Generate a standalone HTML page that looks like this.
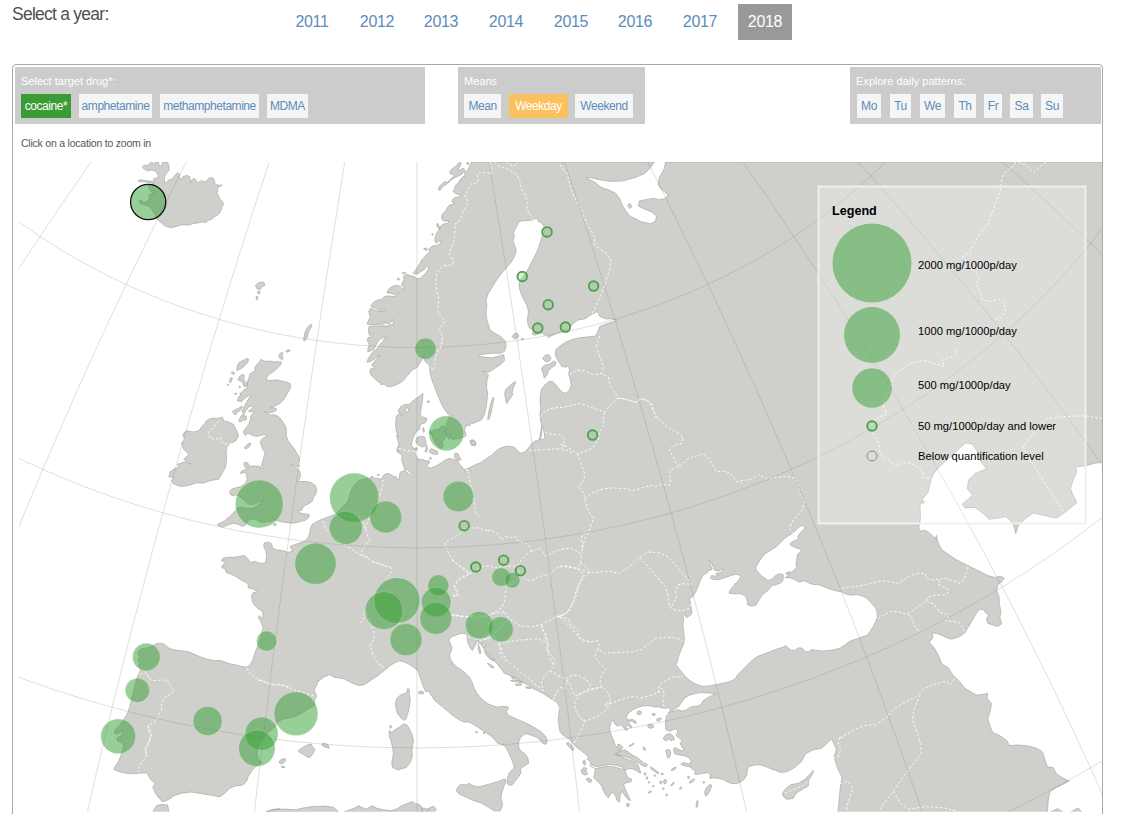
<!DOCTYPE html>
<html lang="en">
<head>
<meta charset="utf-8">
<title>Wastewater analysis and drugs</title>
<style>
html,body{margin:0;padding:0;background:#fff;}
body{width:1127px;height:814px;overflow:hidden;position:relative;font-family:"Liberation Sans",Arial,sans-serif;color:#444;}
.abs{position:absolute;}
#yearlabel{left:12px;top:3px;font-size:17.5px;line-height:22px;color:#505050;letter-spacing:-0.75px;white-space:nowrap;}
.yr{position:absolute;top:4px;height:36px;line-height:36px;width:54px;text-align:center;font-size:16px;color:#5b8cba;letter-spacing:-0.3px;}
.yr.sel{background:#999;color:#fff;}
#box{left:12px;top:64px;width:1089px;height:800px;border:1px solid #a8a8a8;border-radius:4px;background:#fff;}
.panel{position:absolute;top:67px;height:57px;background:#ccc;}
.plabel{position:absolute;top:75px;font-size:11px;line-height:13px;color:#fff;white-space:nowrap;letter-spacing:0.02px;}
.btn{position:absolute;top:94px;height:24px;line-height:24px;background:#f5f5f5;color:#5b8cba;font-size:12px;text-align:center;white-space:nowrap;letter-spacing:-0.45px;}
.btn.g{background:#3a9c35;color:#fff;}
.btn.o{background:#fbc15e;color:#fff;}
#hint{left:21px;top:137px;font-size:10.5px;line-height:13px;color:#555;white-space:nowrap;letter-spacing:-0.22px;}
#map{left:13px;top:162px;}
</style>
</head>
<body>
<div id="yearlabel" class="abs">Select a year:</div>
<div class="yr" style="left:285px">2011</div>
<div class="yr" style="left:350px">2012</div>
<div class="yr" style="left:414px">2013</div>
<div class="yr" style="left:479px">2014</div>
<div class="yr" style="left:544px">2015</div>
<div class="yr" style="left:608px">2016</div>
<div class="yr" style="left:673px">2017</div>
<div class="yr sel" style="left:738px">2018</div>

<div id="box" class="abs"></div>
<div class="panel" style="left:15px;width:410px"></div>
<div class="panel" style="left:458px;width:187px"></div>
<div class="panel" style="left:850px;width:251px"></div>

<div class="plabel" style="left:21px">Select target drug*:</div>
<div class="btn g" style="left:21px;width:50px">cocaine*</div>
<div class="btn" style="left:79px;width:73px">amphetamine</div>
<div class="btn" style="left:160px;width:99px">methamphetamine</div>
<div class="btn" style="left:267px;width:41px">MDMA</div>

<div class="plabel" style="left:464px">Means</div>
<div class="btn" style="left:464px;width:37px">Mean</div>
<div class="btn o" style="left:509px;width:59px">Weekday</div>
<div class="btn" style="left:575px;width:58px">Weekend</div>

<div class="plabel" style="left:856px">Explore daily patterns:</div>
<div class="btn" style="left:857px;width:24px">Mo</div>
<div class="btn" style="left:890px;width:21px">Tu</div>
<div class="btn" style="left:920px;width:25px">We</div>
<div class="btn" style="left:954px;width:22px">Th</div>
<div class="btn" style="left:984px;width:18px">Fr</div>
<div class="btn" style="left:1010px;width:23px">Sa</div>
<div class="btn" style="left:1041px;width:22px">Su</div>

<div id="hint" class="abs">Click on a location to zoom in</div>

<svg id="map" class="abs" width="1089" height="650" viewBox="13 162 1089 650">
<defs><clipPath id="mc"><rect x="13" y="162" width="1089.5" height="649.6"/></clipPath></defs>
<g clip-path="url(#mc)">
<path d="M142.1,167.2 L143.8,165.5 L146.5,165.0 L147.7,166.2 L149.0,164.0 L150.4,162.8 L152.1,162.2 L153.2,164.4 L154.8,162.4 L158.2,162.0 L159.3,165.0 L160.9,166.6 L162.0,164.4 L162.6,162.0 L167.6,162.0 L168.5,164.4 L169.2,168.3 L168.7,171.1 L165.9,173.8 L164.8,176.6 L164.2,179.9 L164.8,183.2 L167.0,182.1 L168.7,179.9 L171.4,179.4 L173.1,177.7 L175.3,174.9 L177.5,172.7 L179.2,173.8 L179.7,177.7 L181.4,179.4 L183.1,176.6 L186.4,175.5 L189.1,176.0 L190.2,178.8 L190.8,183.2 L191.9,179.9 L193.6,178.3 L195.8,179.4 L197.4,182.7 L199.6,181.6 L202.4,180.5 L204.1,182.1 L207.4,180.5 L208.5,178.3 L210.7,177.5 L213.5,178.3 L214.6,181.6 L215.1,184.3 L218.5,185.2 L222.3,184.9 L220.1,186.5 L217.3,188.2 L217.9,191.0 L216.8,193.2 L218.5,195.4 L219.6,198.7 L222.3,201.5 L223.8,203.7 L222.3,206.5 L221.2,209.8 L219.6,213.1 L217.3,215.3 L214.0,217.0 L211.8,219.2 L208.5,220.3 L205.2,222.5 L201.9,221.9 L197.4,223.1 L193.0,223.6 L188.6,225.3 L184.2,224.7 L179.7,225.3 L176.4,226.4 L172.0,227.5 L167.6,226.9 L164.2,225.3 L161.5,223.1 L158.7,220.8 L157.1,219.2 L155.4,215.3 L153.2,212.0 L151.5,208.7 L148.8,206.5 L146.0,205.4 L142.7,204.2 L139.9,203.7 L139.0,201.5 L140.5,199.8 L142.1,200.9 L144.3,202.6 L147.1,200.9 L149.3,198.7 L149.9,196.5 L148.2,196.0 L149.9,194.8 L151.5,193.2 L154.3,193.0 L152.1,192.1 L149.9,190.4 L149.0,187.7 L147.7,186.0 L153.2,183.8 L150.4,182.7 L146.5,182.1 L142.1,181.6 L138.8,181.6 L138.3,180.5 L140.5,179.7 L144.3,180.5 L148.8,181.0 L153.2,181.6 L154.8,181.0 L153.2,179.9 L153.7,178.8 L156.5,177.7 L158.7,177.1 L158.2,175.5 L157.1,173.3 L156.0,171.6 L153.2,170.5 L150.4,170.0 L147.7,171.1 L145.7,170.0 L143.8,168.8ZM255.4,285.4 L258.4,282.4 L263.9,282.2 L264.8,285.4 L261.4,287.1 L260.4,289.6 L257.4,289.1ZM257.9,291.1 L259.9,291.6 L259.4,294.1 L257.9,293.6ZM256.4,296.1 L257.9,296.6 L257.4,299.8 L256.1,299.1ZM303.6,340.1 L304.8,332.6 L307.3,327.6 L311.1,323.9 L311.8,326.4 L308.6,331.4 L306.8,338.8 L304.3,341.3ZM449.7,172.4 L450.9,169.9 L454.0,167.5 L456.5,165.6 L458.4,163.1 L460.9,162.5 L460.2,166.2 L458.4,168.7 L459.6,170.6 L462.1,168.7 L464.0,168.7 L464.6,171.2 L462.1,173.7 L459.6,175.5 L456.5,176.8 L453.4,178.6 L450.3,180.5 L449.1,182.4 L447.2,183.0 L449.7,179.9 L452.8,177.4 L454.7,175.5 L452.2,174.3 L450.3,173.9ZM438.5,189.8 L439.1,186.7 L441.6,184.2 L444.7,181.7 L447.2,182.4 L446.6,184.2 L443.5,186.1 L441.6,188.0 L440.0,190.4ZM431.6,234.3 L432.5,233.3 L433.5,234.3 L432.5,235.3ZM436.6,224.0 L437.9,223.4 L439.1,226.5 L441.0,227.7 L439.1,228.9 L437.3,227.1ZM423.6,248.8 L426.1,248.0 L428.0,249.7 L425.5,250.4ZM466.5,163.1 L468.1,162.2 L468.9,163.7 L467.3,164.7ZM260.9,359.3 L264.6,361.2 L269.6,361.2 L274.5,361.8 L281.4,361.8 L280.7,364.9 L277.0,368.6 L273.3,371.7 L269.6,374.2 L267.1,376.7 L266.5,380.4 L270.8,380.4 L275.8,379.8 L282.0,381.1 L287.0,382.3 L290.1,383.5 L290.7,386.6 L288.8,391.0 L286.3,395.3 L283.9,399.1 L281.4,402.2 L277.6,404.7 L273.3,406.5 L270.2,407.8 L274.5,407.8 L277.0,409.6 L274.5,411.5 L270.8,412.7 L267.1,412.7 L264.6,411.5 L267.7,414.0 L270.8,415.2 L274.5,414.6 L278.3,416.5 L281.4,419.6 L283.2,422.7 L285.7,426.4 L286.3,430.7 L286.3,435.7 L288.2,440.7 L291.3,445.0 L294.4,448.8 L296.3,452.4 L298.8,456.8 L299.4,460.5 L298.1,463.6 L299.4,466.7 L296.3,466.1 L291.9,464.2 L290.7,464.8 L295.7,467.3 L298.1,469.2 L300.0,471.7 L300.6,475.4 L299.4,479.1 L298.1,481.6 L301.9,481.6 L306.8,481.6 L311.8,482.9 L314.9,485.3 L316.8,489.1 L316.1,493.4 L313.7,497.1 L312.4,500.9 L309.3,503.4 L305.6,505.2 L302.5,507.7 L301.9,510.2 L298.1,510.8 L300.6,513.3 L305.0,513.9 L309.3,514.5 L308.7,517.6 L305.6,520.1 L300.6,521.4 L296.9,522.6 L292.5,523.2 L287.0,522.6 L282.0,522.0 L277.6,520.7 L273.9,519.5 L270.8,522.0 L267.7,521.4 L263.4,522.6 L258.4,521.4 L255.9,519.5 L252.2,518.9 L247.8,520.7 L246.6,523.2 L244.7,525.7 L242.2,526.3 L238.5,524.5 L233.5,523.2 L229.2,524.5 L224.8,526.3 L222.4,527.0 L218.6,525.7 L217.1,524.5 L221.1,522.6 L224.8,520.7 L229.2,517.0 L232.9,513.3 L235.4,510.8 L237.3,508.1 L239.8,507.1 L244.7,507.7 L249.7,508.6 L253.4,508.3 L257.1,505.8 L260.9,502.7 L263.6,500.5 L259.6,501.5 L254.7,504.0 L249.7,504.6 L246.0,502.1 L242.2,498.4 L238.5,495.9 L236.0,494.7 L233.5,495.9 L230.4,494.7 L229.6,491.6 L231.7,489.1 L236.0,487.8 L241.0,486.6 L246.0,482.9 L247.2,478.5 L246.6,475.4 L245.3,472.3 L242.2,472.9 L240.4,473.5 L241.6,471.1 L244.7,469.8 L247.8,468.0 L249.7,466.1 L254.7,466.1 L259.6,466.3 L262.1,468.0 L264.0,468.3 L263.4,465.5 L261.5,466.1 L262.1,463.0 L263.4,459.9 L264.0,456.1 L265.2,452.4 L263.4,450.6 L260.2,442.5 L262.1,438.8 L264.6,437.0 L267.7,435.7 L265.8,434.5 L262.1,435.1 L257.1,436.3 L252.8,435.7 L249.7,433.9 L247.2,433.2 L245.3,435.7 L243.5,432.0 L244.7,429.5 L247.2,426.4 L249.1,423.3 L250.3,419.6 L250.9,415.8 L253.4,412.7 L252.8,410.9 L249.7,412.1 L248.4,410.9 L250.9,409.6 L252.8,407.8 L251.6,405.9 L249.1,406.5 L246.6,409.6 L244.1,413.4 L242.2,412.1 L242.9,409.6 L244.7,405.9 L246.6,402.2 L248.4,399.1 L250.9,396.0 L249.7,395.3 L245.3,397.8 L243.5,399.7 L241.0,401.6 L237.3,400.9 L238.5,396.6 L241.0,395.3 L239.8,393.5 L242.2,392.2 L244.1,389.8 L246.6,387.9 L247.8,386.0 L247.2,383.5 L247.8,380.4 L249.1,378.0 L249.7,374.2 L252.2,372.4 L255.3,370.5 L254.7,368.0 L256.5,364.9 L259.0,362.4ZM236.6,369.9 L237.3,366.1 L239.1,362.4 L242.9,360.6 L247.2,358.4 L248.7,359.3 L247.8,362.4 L245.3,364.9 L242.9,367.4 L239.8,369.3 L237.3,370.5ZM231.1,372.4 L233.5,371.7 L234.8,373.6 L232.9,374.6ZM229.6,382.3 L229.8,379.2 L231.3,377.1 L232.3,378.6 L231.3,381.7 L230.1,382.9ZM227.3,384.5 L228.3,384.0 L228.8,385.0 L227.8,385.5ZM237.9,379.2 L239.8,376.1 L242.9,374.2 L244.5,375.5 L243.7,378.6 L244.7,381.7 L247.2,383.5 L246.6,386.0 L244.1,386.6 L242.9,383.5 L241.0,381.1 L238.8,380.4ZM239.0,386.5 L240.2,386.3 L240.5,387.5 L239.3,387.8ZM234.5,393.7 L236.3,393.0 L236.5,394.0 L235.0,394.7ZM232.5,411.5 L235.4,409.4 L238.5,408.4 L241.6,406.1 L242.5,407.4 L240.4,410.2 L237.3,412.1 L236.0,414.6 L234.2,414.3ZM238.8,420.8 L240.4,417.1 L242.9,414.0 L244.5,414.6 L243.5,417.7 L244.7,416.5 L246.2,415.8 L246.6,419.6 L244.7,420.8 L243.5,419.6 L241.6,421.4 L239.5,421.8ZM244.5,448.1 L246.0,445.7 L248.4,443.4 L250.7,443.2 L250.3,445.4 L248.4,447.5 L246.0,449.1ZM278.9,357.5 L279.5,354.3 L281.4,352.2 L283.0,353.1 L282.0,355.6 L283.2,358.1 L282.0,359.7 L280.5,358.7ZM285.7,351.2 L287.6,350.0 L290.1,350.0 L289.4,351.5 L287.0,352.2ZM243.7,464.2 L244.7,462.4 L247.2,462.4 L249.1,464.8 L247.8,467.1 L245.3,467.6ZM273.3,525.1 L274.5,523.5 L276.4,523.9 L275.8,525.5ZM206.2,420.8 L211.2,418.3 L218.6,418.3 L222.4,417.1 L223.6,420.8 L228.6,422.0 L233.5,424.5 L236.0,429.5 L238.5,435.7 L236.0,440.7 L231.1,443.2 L227.3,445.7 L226.1,451.9 L226.6,459.3 L225.6,466.8 L222.4,473.0 L218.6,479.2 L211.2,480.4 L203.7,482.9 L196.3,482.9 L188.8,485.4 L181.4,486.6 L173.9,484.2 L171.4,480.4 L175.2,478.0 L168.9,476.7 L170.2,471.7 L173.9,469.3 L178.9,466.8 L177.6,464.3 L185.1,461.8 L191.3,464.3 L183.9,459.3 L188.8,454.3 L183.9,449.4 L181.4,443.2 L185.1,439.4 L182.6,434.5 L186.3,430.7 L193.8,432.0 L198.8,430.7 L202.5,425.8 L205.0,423.3ZM471.4,162.1 L469.6,166.2 L467.7,170.6 L464.6,172.4 L465.2,175.5 L462.1,177.4 L459.6,180.5 L458.4,183.0 L455.9,184.8 L454.7,188.0 L453.4,191.7 L455.3,193.5 L458.4,194.2 L460.2,195.4 L458.4,197.3 L455.3,197.3 L452.8,199.1 L451.9,201.6 L454.7,202.9 L452.8,204.1 L449.1,205.3 L446.6,208.4 L446.6,210.3 L443.5,212.8 L441.6,215.9 L441.6,219.0 L443.5,220.9 L447.2,220.9 L449.7,221.5 L447.2,223.4 L443.5,224.0 L441.0,225.8 L439.5,228.9 L437.3,232.0 L435.4,236.4 L434.8,240.7 L436.0,243.2 L439.8,240.7 L441.6,240.7 L439.8,243.9 L436.6,245.7 L432.9,245.7 L429.2,248.8 L429.8,251.9 L426.7,254.4 L423.6,258.1 L421.7,260.0 L420.7,261.8 L418.9,264.9 L417.0,268.0 L415.2,270.5 L413.3,273.0 L414.5,274.2 L417.6,273.6 L420.7,271.7 L423.9,269.9 L426.3,267.4 L427.6,266.1 L428.8,267.4 L427.6,270.5 L425.1,273.6 L422.6,276.1 L420.7,278.0 L417.0,278.8 L414.5,276.7 L412.0,276.1 L409.6,275.5 L407.7,274.2 L405.2,274.8 L403.4,276.7 L404.0,279.8 L402.7,282.3 L401.5,284.8 L403.4,287.3 L404.3,289.8 L402.1,288.5 L399.6,286.0 L397.1,285.4 L393.4,286.0 L389.7,287.9 L387.8,290.4 L387.2,292.9 L390.3,293.2 L393.4,294.1 L395.3,295.3 L397.1,292.9 L399.0,292.9 L396.5,296.0 L393.4,296.6 L389.7,296.0 L386.6,296.0 L383.5,297.2 L381.6,299.7 L378.5,299.7 L375.4,300.9 L372.9,302.8 L371.1,305.3 L371.7,307.1 L374.8,307.8 L377.3,309.6 L381.0,310.6 L384.7,309.6 L386.0,309.4 L384.1,311.1 L380.4,311.5 L376.6,310.9 L373.5,309.4 L370.4,308.4 L368.8,310.9 L369.2,314.0 L370.4,317.1 L368.8,319.6 L368.0,322.0 L366.7,323.3 L368.0,324.5 L372.3,324.3 L377.3,324.5 L382.2,324.3 L384.7,323.3 L384.1,321.4 L385.3,322.0 L386.6,323.9 L389.7,323.3 L391.6,321.4 L390.9,318.9 L392.2,318.3 L392.8,321.4 L394.0,323.3 L391.6,324.5 L388.4,325.2 L387.8,327.0 L386.6,325.8 L382.2,325.8 L377.3,326.0 L372.3,325.8 L369.2,326.4 L368.3,329.5 L368.8,333.2 L369.8,335.7 L372.9,333.2 L373.5,334.5 L370.4,337.0 L368.0,337.6 L367.3,340.7 L368.6,342.5 L369.2,345.7 L368.0,348.1 L368.0,350.0 L367.6,351.8 L373.5,350.0 L375.4,346.3 L377.3,342.5 L379.8,339.4 L382.9,337.6 L387.2,336.7 L386.2,338.2 L384.1,338.8 L382.9,341.9 L381.6,342.5 L379.8,344.4 L377.3,348.1 L376.0,350.0 L372.5,352.4 L369.8,356.1 L367.3,360.5 L367.1,362.4 L371.1,361.1 L376.0,358.0 L379.8,355.5 L377.3,358.6 L373.5,362.4 L371.7,364.8 L372.9,366.7 L376.6,368.0 L378.5,366.1 L379.5,367.3 L377.3,369.2 L372.9,368.3 L370.4,369.2 L369.8,372.3 L371.7,376.0 L376.0,379.8 L380.4,383.5 L381.0,384.7 L384.1,384.1 L386.6,386.2 L390.9,386.6 L395.3,385.3 L400.2,382.9 L404.0,379.8 L407.1,376.0 L410.2,372.3 L413.3,369.2 L416.4,368.0 L418.9,364.8 L420.7,361.7 L422.0,358.6 L423.0,355.5 L423.9,358.6 L424.5,360.5 L427.0,363.0 L429.4,365.5 L429.7,369.8 L430.4,374.8 L431.9,379.8 L433.8,384.7 L435.7,389.7 L437.5,394.7 L439.4,399.0 L441.2,403.4 L443.7,408.3 L446.8,412.7 L449.9,415.8 L448.1,419.5 L446.8,423.2 L446.2,427.0 L445.6,431.9 L446.8,435.7 L449.3,439.4 L449.9,433.7 L450.6,437.5 L452.4,439.3 L456.8,438.9 L461.1,438.1 L464.2,436.8 L466.1,435.6 L465.5,432.5 L464.2,430.0 L466.7,425.1 L469.8,425.7 L470.4,423.9 L475.4,422.6 L480.0,420.5 L481.8,419.5 L484.3,414.4 L486.0,407.7 L486.9,400.9 L487.7,394.2 L486.5,387.4 L486.9,380.7 L488.5,374.8 L485.2,373.1 L482.6,371.4 L486.9,372.3 L490.2,371.4 L495.3,368.0 L500.3,364.7 L504.6,360.5 L503.7,354.6 L498.7,356.2 L491.9,357.9 L483.5,357.1 L478.4,355.7 L480.1,354.6 L495.3,352.9 L499.5,353.7 L504.6,351.2 L506.2,346.1 L505.4,341.1 L501.2,336.9 L495.3,333.5 L490.2,330.1 L488.5,325.1 L486.9,320.0 L486.0,313.1 L486.9,306.4 L486.0,299.6 L488.5,292.9 L491.9,287.8 L495.3,281.9 L499.5,276.0 L503.7,271.0 L507.9,265.9 L512.1,260.9 L514.7,255.8 L516.4,250.7 L514.7,245.7 L513.0,240.6 L514.7,235.6 L513.0,233.9 L515.2,228.8 L517.2,225.5 L518.9,222.1 L522.3,220.7 L529.0,220.4 L534.1,219.6 L536.6,217.9 L538.3,221.2 L542.5,223.8 L544.2,227.1 L544.2,231.4 L542.5,235.6 L540.8,240.6 L539.1,245.7 L536.6,252.4 L534.1,257.5 L531.5,262.5 L529.0,267.6 L526.5,271.8 L523.9,276.0 L520.6,279.4 L518.9,284.5 L519.7,289.5 L521.4,294.6 L523.9,299.6 L526.5,304.7 L528.2,309.7 L528.2,314.8 L527.3,320.0 L528.2,325.1 L529.8,328.4 L533.2,330.1 L532.4,334.3 L534.9,335.2 L539.1,333.5 L542.5,332.6 L544.2,335.2 L546.7,334.3 L548.4,337.7 L550.9,336.0 L556.0,333.5 L561.9,331.8 L567.8,329.3 L571.1,325.9 L574.5,322.5 L577.9,320.0 L584.8,318.9 L592.3,314.0 L597.3,311.5 L599.8,316.5 L606.0,318.9 L612.2,318.9 L617.1,320.2 L609.7,322.7 L599.8,326.4 L597.3,332.6 L595.6,336.0 L588.0,336.9 L579.6,337.7 L572.8,339.4 L566.1,341.9 L561.0,345.3 L556.0,349.5 L555.1,353.7 L556.8,358.8 L560.2,363.8 L561.9,366.4 L566.1,367.2 L568.6,365.2 L569.5,370.6 L568.6,373.9 L570.3,379.0 L571.1,384.9 L569.5,390.0 L566.1,393.3 L562.7,392.5 L559.3,389.1 L556.0,384.9 L552.6,381.5 L549.2,381.5 L545.0,384.9 L541.6,389.1 L540.5,394.2 L540.0,400.9 L540.5,407.7 L540.0,416.1 L540.8,421.1 L541.6,426.2 L540.8,431.3 L540.0,436.3 L539.1,439.7 L534.1,441.4 L530.7,444.7 L527.3,449.8 L523.9,452.3 L520.6,453.2 L517.2,450.6 L515.5,448.1 L512.1,446.4 L507.1,446.1 L500.3,448.1 L495.3,451.5 L491.9,455.0 L480.0,462.9 L475.4,464.8 L471.7,466.6 L468.0,468.5 L464.2,469.8 L462.4,467.3 L459.9,464.2 L456.8,461.1 L453.0,459.2 L449.3,458.3 L445.6,459.8 L441.9,462.3 L438.1,464.8 L434.4,466.6 L431.3,467.9 L427.6,467.3 L427.0,464.8 L429.4,462.9 L428.8,460.4 L427.0,461.1 L423.2,459.8 L419.5,459.2 L417.0,458.0 L415.8,454.8 L414.5,451.7 L416.4,449.9 L413.3,448.0 L411.4,445.5 L412.0,441.8 L413.3,437.5 L415.2,433.7 L417.6,430.0 L419.5,429.4 L420.1,425.7 L422.0,423.5 L424.5,423.2 L426.3,421.4 L426.7,418.3 L424.5,417.6 L421.4,416.4 L420.1,414.5 L420.7,410.8 L421.4,407.1 L422.2,402.1 L422.6,398.4 L423.0,393.4 L419.5,395.9 L414.5,399.6 L408.9,404.6 L404.6,404.6 L400.9,406.5 L398.0,410.8 L399.6,413.3 L396.5,415.8 L395.9,419.5 L395.7,425.7 L396.5,431.9 L398.4,436.9 L396.5,435.0 L398.1,441.2 L399.0,446.1 L397.4,447.4 L396.9,451.1 L398.4,453.0 L400.9,453.6 L402.1,456.7 L401.5,459.8 L402.7,462.9 L404.0,467.3 L404.6,470.4 L407.7,469.8 L410.8,472.9 L413.9,476.6 L412.7,477.0 L409.6,474.1 L405.8,471.6 L402.7,471.0 L400.2,472.2 L399.6,475.3 L399.0,479.1 L397.1,479.7 L396.5,477.2 L395.3,476.0 L394.7,477.8 L392.2,475.3 L388.4,473.5 L384.7,474.1 L382.9,476.0 L382.2,479.7 L381.6,479.1 L377.3,478.4 L371.1,477.8 L368.0,478.4 L363.6,479.1 L358.6,480.9 L354.9,484.7 L352.4,488.4 L350.6,492.1 L349.3,497.1 L347.5,502.0 L343.7,505.8 L340.0,509.5 L339.9,510.1 L334.9,514.3 L328.1,516.9 L321.4,519.4 L316.3,521.9 L312.1,524.4 L310.4,528.7 L309.6,533.7 L307.9,537.9 L304.5,541.3 L299.5,543.0 L294.4,544.7 L290.2,546.4 L291.9,549.7 L292.7,551.4 L287.7,552.3 L282.6,550.6 L275.9,549.7 L272.5,548.0 L271.6,543.8 L268.3,542.1 L264.1,543.0 L263.7,546.4 L265.7,550.6 L266.6,555.6 L266.1,560.7 L264.9,563.2 L259.0,563.2 L255.6,561.5 L250.6,562.4 L247.2,558.2 L244.7,555.6 L238.8,556.5 L233.7,557.3 L227.8,557.3 L222.8,558.2 L221.6,560.7 L225.3,562.4 L222.8,564.9 L221.6,567.4 L225.3,569.1 L226.1,572.5 L231.2,574.2 L236.2,576.7 L241.3,580.1 L246.4,582.6 L248.9,586.0 L248.0,587.7 L253.9,589.3 L257.3,591.9 L253.1,592.7 L251.4,596.1 L252.3,601.1 L254.8,605.4 L258.2,608.7 L262.4,611.3 L263.2,616.3 L261.5,618.0 L259.0,615.5 L258.7,618.0 L260.7,621.4 L262.4,625.6 L263.2,628.1 L262.2,630.1 L261.0,636.9 L258.5,643.6 L255.9,650.3 L254.2,655.4 L252.6,660.5 L250.0,664.7 L246.7,667.2 L241.6,666.4 L234.9,664.7 L229.8,663.8 L224.7,662.1 L220.5,660.5 L214.6,660.5 L207.9,659.6 L201.1,657.1 L195.2,654.6 L189.3,652.0 L184.3,651.2 L177.5,650.3 L172.5,649.5 L168.3,647.8 L164.9,644.4 L160.7,643.3 L156.5,643.6 L153.9,645.3 L148.0,647.8 L142.1,648.7 L139.1,650.3 L137.9,653.7 L139.6,656.2 L137.9,659.6 L139.6,663.0 L138.8,666.4 L140.5,669.7 L139.6,672.3 L137.9,675.6 L136.2,680.7 L134.6,687.4 L132.9,694.2 L131.2,700.9 L129.5,707.7 L127.0,714.4 L123.6,719.5 L120.2,724.5 L116.9,727.9 L114.3,732.1 L116.0,734.6 L120.2,732.1 L123.6,731.3 L121.1,735.5 L116.9,738.0 L117.7,741.4 L121.1,742.2 L123.6,744.7 L122.8,749.8 L121.1,755.0 L118.8,760.9 L115.5,765.9 L113.8,769.6 L120.5,772.1 L129.2,773.8 L137.9,773.3 L146.6,772.8 L148.6,775.8 L151.6,780.8 L155.3,783.3 L152.8,787.0 L155.3,793.2 L159.0,798.2 L162.7,801.9 L168.9,799.4 L173.9,795.7 L181.4,793.2 L191.3,792.0 L198.8,793.2 L206.2,794.4 L213.7,795.7 L219.9,796.9 L224.8,793.2 L229.8,788.2 L236.0,785.7 L240.0,785.4 L243.4,784.5 L246.7,781.1 L248.4,776.1 L251.0,771.9 L254.3,767.7 L258.5,764.3 L261.9,762.6 L258.5,759.2 L256.9,754.2 L257.7,747.4 L261.1,740.7 L265.3,735.6 L270.3,730.6 L275.4,726.4 L277.9,722.1 L282.1,719.6 L288.9,717.9 L295.6,716.2 L300.7,713.7 L307.4,709.5 L314.2,705.3 L315.0,698.5 L316.7,696.9 L315.9,694.3 L314.2,690.1 L316.7,685.1 L318.4,680.0 L317.8,681.4 L323.7,677.2 L329.6,674.6 L333.8,677.2 L338.9,678.0 L343.9,678.8 L349.0,681.4 L354.1,683.9 L359.1,685.6 L364.2,684.7 L369.2,681.4 L374.3,678.0 L379.3,674.6 L384.4,670.4 L389.5,666.2 L394.5,662.8 L399.6,660.8 L404.6,662.0 L409.7,664.5 L414.7,667.9 L418.1,671.3 L419.8,676.3 L421.5,681.4 L423.2,686.4 L425.7,691.5 L428.4,690.9 L431.8,696.0 L434.3,700.2 L438.5,703.6 L443.6,707.8 L448.7,712.0 L453.7,716.2 L458.8,719.6 L463.8,722.1 L468.9,722.1 L473.9,724.6 L479.0,728.0 L484.1,731.4 L489.1,734.7 L494.2,739.0 L497.5,743.2 L502.6,744.7 L506.0,747.2 L508.5,752.3 L511.0,758.2 L513.6,764.1 L514.1,768.3 L511.0,770.8 L508.5,774.2 L507.7,778.4 L506.8,782.6 L508.5,785.1 L511.9,785.1 L515.2,780.9 L518.6,776.7 L521.1,772.5 L520.3,769.1 L524.5,765.7 L528.7,763.2 L527.9,758.2 L525.4,753.9 L521.1,751.4 L518.6,747.2 L518.6,742.1 L520.3,737.9 L523.7,734.6 L527.0,733.7 L531.3,735.4 L536.3,737.1 L540.5,740.5 L543.1,743.8 L546.1,744.2 L547.3,740.5 L545.6,736.2 L541.4,732.0 L536.3,728.7 L530.4,725.3 L525.4,722.8 L519.5,720.2 L513.6,717.7 L508.5,715.2 L506.0,711.8 L508.5,708.4 L507.7,706.7 L502.6,706.4 L496.7,707.1 L494.2,706.1 L489.1,704.4 L484.1,701.0 L479.8,696.8 L476.5,692.6 L473.9,687.5 L472.3,682.5 L469.7,677.4 L465.5,673.2 L461.3,669.8 L456.2,666.5 L452.9,663.1 L450.3,658.9 L449.5,654.7 L451.2,651.3 L452.0,647.9 L450.3,643.7 L449.0,640.3 L451.2,637.0 L456.2,634.9 L461.3,633.3 L465.5,633.6 L468.0,637.0 L467.2,637.8 L468.0,642.9 L469.7,647.1 L472.3,650.5 L474.8,646.2 L476.5,642.9 L477.3,640.3 L479.0,642.9 L480.7,643.7 L483.2,647.9 L486.6,652.1 L490.0,655.5 L494.2,660.6 L498.4,665.6 L501.8,669.8 L504.3,673.2 L508.5,674.9 L512.7,676.6 L517.8,679.1 L522.8,682.5 L527.9,685.0 L532.9,688.4 L538.0,690.9 L543.1,693.4 L548.1,696.8 L553.2,700.2 L557.4,702.7 L559.9,707.8 L559.1,712.8 L558.2,719.6 L559.1,726.3 L559.9,731.4 L562.4,734.7 L566.7,737.3 L570.0,739.8 L571.7,742.1 L574.2,745.5 L577.6,748.0 L581.0,750.6 L585.2,753.9 L588.6,757.3 L586.9,759.0 L589.4,761.5 L591.9,764.9 L595.3,767.4 L594.5,775.9 L593.4,776.8 L595.1,779.3 L598.4,781.9 L601.8,786.1 L603.5,791.1 L606.0,795.4 L608.5,797.9 L610.2,794.5 L612.8,792.0 L615.3,795.4 L617.0,800.4 L619.5,802.1 L620.3,794.5 L622.0,791.1 L624.6,795.4 L627.9,799.6 L630.5,800.4 L627.9,794.5 L625.4,789.5 L623.7,784.4 L626.2,782.7 L630.5,781.9 L632.1,779.3 L627.9,777.7 L626.2,773.4 L624.6,770.9 L628.8,768.4 L633.8,769.2 L638.0,771.8 L640.6,773.4 L639.7,769.2 L638.0,765.0 L635.5,762.5 L631.3,760.8 L626.2,759.1 L622.0,756.6 L617.0,754.9 L614.4,754.1 L618.7,752.7 L621.2,749.8 L622.9,747.3 L620.3,744.8 L617.8,743.9 L617.0,747.3 L619.5,749.0 L617.8,749.8 L615.3,745.6 L613.6,740.6 L611.9,736.4 L609.9,731.3 L609.9,726.2 L611.1,722.0 L613.3,720.3 L614.4,723.7 L617.8,726.2 L621.2,724.6 L623.7,727.9 L626.2,730.5 L627.9,729.6 L625.4,726.2 L627.9,725.4 L630.5,727.9 L632.1,727.1 L629.6,723.7 L627.9,721.2 L632.1,721.2 L635.5,723.7 L636.4,722.0 L633.0,719.5 L628.8,720.0 L626.2,717.8 L627.9,713.6 L632.1,710.2 L637.2,707.7 L642.3,706.0 L648.2,705.5 L654.1,706.9 L659.1,706.9 L664.2,708.5 L668.4,707.7 L670.9,708.5 L669.2,711.9 L666.7,715.3 L665.9,719.5 L665.5,723.7 L665.9,729.6 L669.2,731.3 L673.4,729.6 L676.8,728.8 L677.7,732.1 L676.0,735.5 L679.3,738.0 L681.9,740.6 L680.2,743.9 L682.7,748.2 L685.2,749.0 L681.9,750.7 L677.7,749.0 L675.1,747.3 L673.4,749.8 L675.1,754.1 L679.3,754.9 L684.4,755.7 L688.6,757.4 L691.1,760.8 L690.3,764.2 L686.9,763.3 L682.7,762.5 L681.0,764.2 L684.4,765.9 L689.5,766.7 L692.8,769.2 L695.4,771.8 L694.5,774.3 L697.9,774.3 L702.9,773.4 L708.0,772.6 L710.5,775.1 L709.7,778.5 L713.1,777.7 L718.1,778.5 L723.2,779.3 L727.4,781.9 L731.6,783.6 L736.7,783.6 L740.9,781.9 L744.2,779.3 L746.8,775.1 L747.1,770.9 L748.5,766.7 L754.4,765.0 L760.3,765.0 L766.2,766.7 L772.1,769.2 L777.1,770.9 L780.0,772.3 L786.1,772.1 L793.5,768.3 L801.0,762.1 L806.0,753.4 L813.4,749.7 L820.9,748.5 L827.1,743.5 L830.3,739.8 L832.0,739.5 L836.5,749.5 L834.0,757.0 L838.0,769.5 L842.0,777.0 L840.0,789.5 L839.0,802.0 L838.0,811.6 L1047.5,811.6 L1048.3,799.0 L1050.1,791.3 L1056.5,787.5 L1064.1,783.7 L1069.2,781.1 L1061.5,777.3 L1056.5,773.5 L1052.6,767.1 L1047.5,767.1 L1045.0,759.5 L1042.4,751.9 L1036.1,748.0 L1028.4,746.0 L1018.3,745.0 L1009.3,745.5 L1006.8,740.4 L999.2,735.3 L992.8,732.8 L990.2,726.4 L987.7,718.7 L990.2,711.1 L991.5,703.5 L987.2,698.4 L987.7,693.3 L982.6,694.6 L976.2,695.1 L971.1,692.0 L964.8,688.2 L959.7,681.8 L953.3,675.5 L948.2,667.8 L941.9,664.0 L938.0,654.4 L934.2,648.0 L929.1,642.2 L932.9,637.9 L932.2,632.8 L936.8,633.5 L941.9,635.3 L947.0,637.9 L952.0,639.1 L959.7,636.6 L964.8,632.8 L968.6,626.4 L972.4,620.0 L976.2,613.7 L979.5,609.1 L983.9,609.8 L985.1,612.4 L989.0,614.9 L986.4,618.8 L987.7,623.3 L992.8,625.1 L997.9,626.4 L1001.7,623.8 L999.9,617.5 L1000.9,611.1 L999.2,603.5 L999.2,597.1 L996.6,590.7 L997.9,584.4 L1001.7,581.8 L1004.2,578.0 L1000.4,576.2 L995.3,577.5 L987.7,575.5 L980.1,571.6 L972.4,567.8 L964.8,564.0 L957.1,560.2 L949.5,555.1 L941.9,550.0 L939.1,544.7 L937.4,540.5 L936.5,535.4 L934.9,538.8 L932.3,535.4 L928.1,532.0 L924.7,530.3 L920.5,531.2 L918.8,527.8 L920.0,521.9 L920.5,515.2 L920.0,508.4 L920.5,502.5 L923.1,503.4 L924.7,501.7 L922.2,500.0 L921.5,500.2 L927.9,492.6 L930.4,482.4 L932.9,474.8 L938.0,468.4 L944.4,462.0 L952.0,455.7 L959.7,448.0 L966.1,442.9 L972.4,444.2 L977.5,451.9 L980.1,460.8 L986.4,468.4 L981.3,471.0 L975.0,473.5 L968.6,479.9 L967.3,488.8 L972.4,495.1 L967.3,500.2 L962.2,504.1 L964.8,507.9 L975.0,507.4 L982.6,513.0 L989.0,519.3 L997.9,518.1 L1005.5,516.8 L1013.2,523.2 L1015.7,533.3 L1018.3,525.7 L1025.9,518.1 L1033.5,513.0 L1043.7,515.5 L1056.5,518.1 L1064.1,513.0 L1070.5,507.9 L1076.8,502.8 L1073.0,495.1 L1070.5,488.8 L1073.0,479.9 L1076.8,472.2 L1075.5,467.1 L1084.5,465.9 L1094.6,463.3 L1102.3,462.0 L1102.5,462.0 L1102.5,162.0 L665.6,162.0 L664.3,168.6 L659.4,177.3 L658.1,184.8 L661.9,189.8 L668.1,194.7 L665.6,198.4 L659.4,199.7 L653.2,198.4 L645.7,199.7 L639.5,200.9 L638.3,205.9 L643.2,208.4 L651.9,212.1 L656.4,215.8 L655.7,220.8 L650.7,223.8 L642.0,222.0 L634.5,218.3 L629.6,215.8 L625.8,210.9 L622.1,204.7 L619.6,198.4 L615.9,193.5 L608.4,189.8 L601.0,187.3 L594.8,182.3 L588.6,179.3 L586.1,177.3 L592.3,178.1 L599.8,179.8 L609.7,181.3 L622.1,181.1 L634.5,177.8 L644.5,173.6 L650.7,167.4 L654.4,161.7 L654.4,162.0ZM399.5,279.2 L399.2,279.9 L398.4,280.2 L397.6,279.9 L397.3,279.2 L397.6,278.5 L398.4,278.2 L399.2,278.5ZM405.7,272.5 L405.3,273.2 L404.2,273.7 L402.9,273.8 L402.3,273.4 L402.7,272.8 L403.8,272.3 L405.0,272.2ZM426.7,401.9 L428.4,400.6 L429.7,401.2 L428.4,402.7ZM422.6,428.8 L423.5,427.6 L424.5,430.7 L423.5,432.5ZM415.8,440.6 L417.0,437.5 L420.7,436.2 L424.5,436.8 L425.7,440.6 L426.3,444.3 L424.5,446.8 L421.4,446.8 L418.3,444.9 L416.4,443.0ZM429.4,434.4 L431.9,431.9 L434.4,429.4 L438.1,430.1 L440.6,427.0 L444.3,425.7 L445.6,429.4 L445.0,434.4 L446.8,433.7 L445.6,437.5 L443.7,439.9 L442.1,442.4 L443.1,446.1 L441.9,448.6 L439.4,447.4 L436.9,444.9 L433.8,439.9 L431.9,435.0 L430.1,430.0ZM429.2,450.5 L431.3,448.6 L434.4,449.9 L437.5,451.4 L438.1,453.6 L435.7,454.6 L431.9,453.6 L429.7,452.4ZM425.7,448.6 L426.7,445.5 L427.6,448.6 L426.3,452.4 L425.1,451.7ZM414.5,448.6 L416.4,447.4 L417.6,449.3 L416.0,450.5ZM429.4,458.0 L430.7,457.3 L431.4,458.8 L430.2,459.6ZM454.3,454.8 L455.5,453.0 L458.0,453.6 L459.3,456.7 L461.1,459.2 L459.3,461.1 L456.8,460.4 L454.9,458.0ZM470.4,441.8 L471.9,440.2 L474.8,441.4 L476.0,444.3 L474.2,445.5 L471.7,444.7ZM370.8,477.0 L372.5,476.2 L373.0,477.0 L371.3,477.7ZM377.0,475.0 L378.8,474.2 L379.3,475.0 L377.5,475.7ZM397.4,448.6 L398.4,446.1 L399.1,448.6 L398.1,451.7ZM487.7,419.5 L488.9,411.0 L491.1,402.6 L493.3,397.2 L493.9,397.9 L492.8,404.3 L491.1,412.7 L489.4,418.6ZM504.6,393.3 L506.2,389.1 L510.5,384.9 L514.7,381.5 L515.9,382.4 L513.8,386.6 L512.1,392.5 L513.0,394.2 L509.6,399.2 L507.1,403.4 L506.2,402.6ZM512.1,336.9 L514.2,333.8 L517.2,333.1 L518.9,336.0 L517.2,338.5 L514.2,338.5ZM521.4,338.5 L522.9,338.2 L523.3,339.6 L521.8,339.9ZM541.6,368.0 L544.2,365.5 L549.2,364.2 L553.4,361.3 L556.0,362.1 L555.1,365.5 L550.9,368.0 L548.4,371.4 L546.7,375.6 L544.2,378.2 L543.3,373.9 L542.2,370.6ZM542.5,358.4 L545.0,355.4 L548.4,354.6 L550.9,357.4 L550.1,360.5 L546.7,362.1 L544.2,360.5ZM470.0,440.5 L472.5,439.7 L475.9,442.2 L475.1,445.6 L471.7,445.6ZM627.6,205.2 L630.1,203.4 L632.0,206.6 L629.6,208.6ZM298.2,750.8 L302.4,747.4 L307.4,744.9 L311.6,744.1 L312.5,747.4 L315.0,749.1 L313.3,753.3 L310.0,757.5 L306.6,756.7 L303.2,754.2 L299.8,752.8ZM321.8,744.1 L325.1,743.2 L328.5,745.4 L329.3,748.3 L326.0,747.4 L322.6,746.1ZM279.1,761.8 L281.3,759.2 L285.2,758.4 L285.9,760.6 L283.0,763.4 L280.1,764.0ZM281.3,766.3 L284.2,766.3 L284.7,767.7 L281.8,767.7ZM407.7,688.4 L409.1,689.3 L409.4,694.3 L410.3,700.2 L409.4,707.0 L407.7,713.7 L406.0,718.8 L404.4,720.5 L401.0,717.9 L397.6,713.7 L395.9,707.8 L395.4,702.8 L396.8,698.5 L400.1,695.2 L404.4,693.5 L406.9,691.8ZM389.2,730.6 L391.7,732.3 L395.1,729.7 L399.3,727.2 L403.5,723.8 L406.9,724.7 L409.4,728.9 L411.9,733.9 L413.6,740.7 L411.9,749.1 L412.3,755.9 L410.3,762.6 L406.0,767.7 L401.8,768.5 L398.5,770.2 L395.1,768.5 L392.6,767.7 L391.7,762.6 L393.4,754.2 L392.6,747.4 L390.9,740.7 L389.2,735.6ZM389.7,726.4 L391.0,725.2 L391.7,727.2 L390.4,728.6ZM418.4,692.1 L421.2,691.1 L423.7,692.1 L423.4,693.8 L419.0,693.8ZM266.1,811.7 L273.7,809.5 L283.8,809.0 L295.6,809.8 L304.1,807.8 L314.2,806.4 L324.3,806.1 L333.6,807.3 L338.6,811.7ZM344.5,811.7 L349.6,809.8 L354.6,808.1 L358.8,805.6 L361.4,807.3 L366.4,809.0 L372.3,805.6 L376.5,808.1 L383.3,809.8 L391.7,810.6 L396.8,809.0 L401.8,805.6 L408.6,803.1 L412.8,801.4 L415.3,803.9 L418.7,803.9 L421.2,806.4 L422.9,811.7ZM425.4,811.7 L430.0,809.5 L421.7,807.9 L422.0,811.6ZM425.9,811.6 L429.3,807.9 L433.5,806.2 L436.0,808.7 L435.2,811.6ZM152.8,812.1 L156.5,805.6 L161.5,804.4 L167.7,805.1 L168.9,812.1ZM265.8,812.1 L273.3,809.3 L280.0,808.8 L266.1,811.7ZM456.2,791.0 L457.9,786.8 L461.3,784.3 L465.5,785.1 L468.9,783.4 L473.9,786.0 L479.8,786.8 L485.7,785.1 L491.6,783.4 L497.5,781.8 L502.6,779.6 L505.6,779.2 L505.1,783.4 L503.4,787.7 L501.8,792.7 L500.9,797.8 L501.8,801.1 L502.6,805.4 L500.1,811.3 L495.0,811.3 L490.8,808.7 L485.7,805.4 L480.7,802.8 L474.8,801.1 L468.9,798.6 L463.8,796.1 L459.6,794.4ZM475.6,731.7 L477.0,731.2 L477.3,732.5 L476.0,732.9ZM483.4,732.5 L484.7,732.0 L485.1,733.4 L483.7,733.7ZM478.2,643.7 L479.8,647.9 L481.0,653.0 L479.8,653.8 L478.2,649.6ZM481.5,642.9 L484.9,644.6 L485.7,647.1 L483.2,646.2ZM484.1,650.5 L487.4,653.8 L490.8,658.0 L495.0,659.7 L494.2,660.9 L490.0,659.2 L486.6,655.5ZM487.4,663.1 L490.8,664.8 L494.2,667.3 L492.5,668.2 L489.1,665.6ZM511.0,677.1 L516.1,676.6 L517.8,678.3 L513.6,679.1ZM510.2,680.5 L516.1,680.0 L522.8,681.6 L521.1,682.8 L514.4,681.6ZM515.2,684.2 L521.1,683.8 L522.0,685.0 L516.1,685.5ZM525.4,686.7 L530.4,687.5 L530.9,688.7 L526.2,688.1ZM566.3,743.5 L568.3,742.1 L570.9,744.7 L573.4,748.0 L573.7,750.2 L571.7,749.7 L569.2,747.2ZM582.7,761.5 L584.4,759.8 L586.0,763.2 L584.4,765.4ZM581.0,770.8 L583.5,767.4 L586.9,768.3 L586.0,771.6 L587.7,774.2 L584.4,775.0 L581.8,773.3ZM586.0,778.9 L588.6,777.9 L591.9,780.1 L590.6,782.6 L587.7,781.3ZM615.3,754.9 L619.5,751.5 L624.6,749.8 L627.9,751.5 L632.1,754.9 L637.2,757.4 L640.6,760.0 L643.9,763.3 L647.3,764.2 L646.5,766.7 L643.1,765.9 L638.9,763.3 L634.7,760.8 L629.6,758.3 L623.7,756.1 L618.7,755.4ZM641.6,712.8 L640.9,714.2 L639.2,714.8 L637.6,714.2 L636.9,712.8 L637.6,711.3 L639.2,710.7 L640.9,711.3ZM655.4,714.4 L654.9,715.3 L653.7,715.6 L652.5,715.3 L652.0,714.4 L652.5,713.6 L653.7,713.3 L654.9,713.6ZM661.2,718.6 L660.8,719.8 L659.2,720.8 L657.4,721.0 L656.4,720.4 L656.8,719.2 L658.3,718.2 L660.1,718.0ZM653.7,726.2 L652.8,727.7 L650.7,728.3 L648.5,727.7 L647.7,726.2 L648.5,724.8 L650.7,724.2 L652.8,724.8ZM663.3,738.0 L665.9,734.7 L670.1,733.5 L673.4,736.4 L674.3,739.7 L670.9,740.6 L668.9,738.9 L666.7,740.6 L664.2,740.2ZM665.5,750.7 L669.2,749.3 L670.9,753.2 L669.6,757.4 L667.5,757.8 L666.7,754.1ZM676.4,767.4 L676.0,768.4 L674.3,769.8 L672.3,770.6 L671.2,770.4 L671.6,769.3 L673.3,768.0 L675.3,767.2ZM645.3,750.4 L644.4,750.3 L643.4,749.2 L642.9,747.8 L643.3,746.9 L644.2,747.1 L645.2,748.2 L645.6,749.5ZM631.8,744.9 L631.6,745.5 L630.8,746.2 L629.8,746.6 L629.1,746.4 L629.3,745.8 L630.1,745.0 L631.1,744.7ZM633.6,742.9 L633.8,743.5 L633.6,744.3 L633.0,744.9 L632.4,745.0 L632.2,744.4 L632.4,743.6 L633.0,743.0ZM650.4,766.7 L653.2,768.4 L656.6,770.9 L659.1,772.9 L657.4,773.4 L654.1,770.9 L651.0,768.9ZM663.5,774.0 L663.1,774.5 L662.2,774.8 L661.2,774.5 L660.8,774.0 L661.2,773.4 L662.2,773.1 L663.1,773.4ZM646.0,774.0 L645.7,775.0 L645.1,775.5 L644.5,775.0 L644.3,774.0 L644.5,772.9 L645.1,772.4 L645.7,772.9ZM647.8,778.0 L647.6,779.0 L647.0,779.3 L646.4,779.0 L646.1,778.0 L646.4,777.0 L647.0,776.6 L647.6,777.0ZM649.8,782.4 L649.6,783.0 L649.0,783.2 L648.4,783.0 L648.2,782.4 L648.4,781.8 L649.0,781.5 L649.6,781.8ZM654.1,786.1 L653.8,786.7 L653.2,786.9 L652.6,786.7 L652.4,786.1 L652.6,785.5 L653.2,785.2 L653.8,785.5ZM655.6,775.6 L655.4,776.4 L654.9,776.6 L654.4,776.4 L654.2,775.6 L654.4,774.9 L654.9,774.6 L655.4,774.9ZM662.0,782.4 L661.6,783.5 L660.8,783.9 L660.0,783.5 L659.6,782.4 L660.0,781.3 L660.8,780.9 L661.6,781.3ZM666.5,781.8 L665.8,783.4 L664.6,783.9 L663.7,783.0 L663.5,781.3 L664.3,779.7 L665.4,779.2 L666.4,780.1ZM664.2,789.1 L663.7,789.5 L662.9,789.3 L662.4,788.8 L662.5,788.1 L663.0,787.7 L663.8,787.9 L664.2,788.5ZM674.3,782.4 L674.2,783.3 L673.2,784.7 L671.8,785.7 L670.9,785.7 L671.0,784.8 L672.0,783.5 L673.4,782.5ZM682.0,787.5 L681.9,788.3 L681.1,789.0 L680.1,789.3 L679.4,789.0 L679.5,788.3 L680.3,787.6 L681.3,787.2ZM667.5,794.9 L667.3,795.7 L666.7,796.0 L666.1,795.7 L665.9,794.9 L666.1,794.0 L666.7,793.7 L667.3,794.0ZM651.5,791.2 L651.3,792.0 L650.2,792.8 L648.9,793.1 L648.2,792.8 L648.4,792.0 L649.5,791.2 L650.8,790.9ZM694.8,779.1 L694.4,780.3 L692.6,781.9 L690.4,783.0 L689.2,783.0 L689.6,781.8 L691.4,780.2 L693.5,779.1ZM697.9,804.1 L697.3,806.6 L696.5,807.6 L696.1,806.5 L696.2,803.8 L696.8,801.3 L697.6,800.3 L698.0,801.4ZM629.4,805.0 L629.0,806.3 L627.9,806.8 L626.9,806.3 L626.4,805.0 L626.9,803.7 L627.9,803.1 L629.0,803.7ZM689.6,777.3 L689.3,778.3 L688.6,778.7 L687.9,778.3 L687.6,777.3 L687.9,776.4 L688.6,776.0 L689.3,776.4ZM704.6,782.4 L704.4,783.0 L703.8,783.2 L703.2,783.0 L702.9,782.4 L703.2,781.8 L703.8,781.5 L704.4,781.8ZM704.6,792.0 L706.3,787.8 L709.7,784.4 L711.7,785.2 L710.5,789.5 L708.0,794.5 L705.5,796.2ZM690.0,706.4 L689.6,706.9 L688.6,707.2 L687.7,706.9 L687.3,706.4 L687.7,705.8 L688.6,705.5 L689.6,705.8ZM782.4,793.2 L786.1,788.2 L791.1,784.5 L798.5,783.3 L804.7,779.5 L809.7,774.6 L813.4,770.3 L812.9,773.3 L808.4,780.8 L808.4,785.7 L802.2,789.5 L796.0,793.2 L793.5,798.2 L787.3,799.4 L783.6,796.9ZM1050.1,812.0 L1057.7,808.6 L1062.8,812.0ZM1070.5,812.0 L1078.1,807.9 L1081.9,812.0Z" fill="#cfcfcb" stroke="#a9a9a6" stroke-width="0.7" stroke-linejoin="round"/>
<path d="M676.9,663.1 L678.5,656.3 L681.1,649.6 L683.6,644.5 L684.4,637.8 L683.6,631.0 L682.8,624.3 L683.6,619.2 L683.3,615.9 L685.3,614.2 L686.1,617.5 L689.5,615.9 L692.0,613.3 L691.2,607.4 L690.3,602.4 L689.5,598.2 L692.9,596.5 L695.4,592.3 L697.9,587.2 L699.6,582.1 L701.3,577.9 L703.8,574.6 L707.2,572.9 L708.9,570.3 L712.3,569.5 L710.6,565.3 L709.2,560.2 L711.4,562.8 L713.6,567.8 L714.8,570.3 L718.2,571.2 L723.2,568.7 L722.7,571.2 L719.0,572.9 L715.6,573.7 L718.2,575.4 L714.8,576.2 L711.4,575.4 L710.6,578.4 L714.8,579.6 L719.0,579.6 L724.1,577.9 L729.1,576.2 L734.2,574.6 L738.4,574.6 L740.9,576.2 L739.2,579.6 L735.9,583.0 L732.5,587.2 L730.0,590.6 L729.1,593.1 L734.2,593.9 L739.2,593.6 L743.4,594.8 L746.3,597.3 L747.3,601.5 L747.7,604.9 L751.9,606.1 L756.1,604.9 L758.6,600.7 L761.1,596.5 L764.5,593.1 L768.7,589.7 L772.1,585.5 L776.3,584.7 L780.5,583.0 L783.1,580.5 L783.1,574.6 L778.8,573.7 L774.6,576.2 L771.3,579.6 L767.9,580.5 L764.5,577.9 L761.1,575.4 L758.6,572.9 L756.1,569.5 L755.8,567.0 L758.6,562.2 L761.7,557.8 L765.5,553.5 L770.4,550.4 L775.4,547.3 L779.8,543.5 L783.5,539.2 L787.8,536.1 L792.2,533.6 L794.7,531.1 L797.8,528.6 L800.2,526.1 L802.7,525.5 L804.6,526.8 L804.6,528.6 L802.1,531.1 L799.6,533.6 L797.8,536.7 L798.4,539.2 L795.3,540.4 L792.2,541.7 L789.7,544.2 L791.6,546.0 L794.7,547.3 L798.4,548.5 L802.1,550.4 L799.6,552.2 L797.8,554.1 L797.1,557.2 L796.5,560.9 L795.9,564.7 L797.1,566.5 L794.7,569.6 L791.6,572.1 L787.8,571.9 L785.3,573.4 L787.2,574.6 L789.1,573.4 L787.8,575.8 L785.3,577.7 L789.7,577.7 L794.7,579.6 L798.4,582.0 L802.1,581.4 L804.6,580.8 L808.3,582.7 L813.3,584.5 L818.3,584.5 L823.2,586.4 L829.4,588.9 L835.7,590.7 L841.9,592.0 L846.8,594.5 L851.8,595.1 L856.8,594.5 L861.7,595.7 L866.7,598.2 L870.4,601.9 L874.2,606.3 L876.6,610.0 L877.5,616.3 L875.9,621.4 L873.3,626.4 L870.0,631.5 L867.4,635.0 L858.0,638.5 L850.0,641.1 L845.4,644.5 L840.4,647.9 L835.3,649.6 L828.6,650.4 L821.8,650.9 L816.8,650.4 L811.7,649.6 L808.3,652.1 L805.0,651.3 L801.6,647.9 L798.2,647.9 L794.9,650.4 L791.5,650.4 L788.1,647.9 L785.6,645.4 L783.9,647.0 L778.0,648.7 L771.3,651.3 L764.5,653.8 L757.8,656.3 L752.7,659.7 L747.7,664.7 L742.6,669.8 L737.5,675.0 L735.2,678.9 L728.9,681.9 L719.0,683.9 L709.1,685.9 L702.9,686.4 L695.4,683.9 L689.2,680.1 L684.2,675.2 L679.3,669.0 L675.5,664.0ZM671.8,711.1 L675.1,708.5 L679.3,706.0 L681.9,701.8 L684.4,698.4 L689.5,695.1 L695.4,693.4 L701.3,692.5 L708.0,693.0 L715.6,693.4 L711.4,695.9 L706.3,698.4 L702.9,701.0 L701.3,704.3 L697.9,706.0 L691.1,706.9 L686.1,709.9 L681.9,711.1 L676.8,709.4 L673.4,711.6ZM540.8,438.8 L542.2,427.9 L543.5,427.9 L544.8,438.0 L542.8,439.7ZM464.2,469.5 L466.7,468.8 L470.4,469.5 L470.7,471.0 L466.7,471.2 L464.5,470.7ZM405.2,410.8 L406.5,408.1 L408.3,407.7 L408.6,410.2 L407.1,412.3ZM400.6,414.5 L402.7,413.9 L403.4,415.2 L401.5,416.0ZM590.0,764.5 L596.7,766.7 L603.5,765.4 L610.2,764.5 L617.0,765.4 L622.0,767.0 L624.6,769.6 L621.2,768.9 L615.3,767.2 L608.5,766.2 L601.8,767.2 L595.9,768.6 L590.0,766.2Z" fill="#fff" stroke="#a9a9a6" stroke-width="0.7" stroke-linejoin="round"/>
<path d="M218.6,420.8 L213.7,427.0 L208.7,432.0 L209.9,438.2 L216.1,439.4 L219.9,437.0 L222.4,443.2 L227.3,444.4 L232.3,443.2M490.1,162.1 L491.3,167.5 L491.9,173.9 L487.0,173.0 L479.5,172.4 L477.3,174.9 L478.3,179.9 L477.0,183.0 L472.0,183.0 L469.6,186.1 L467.7,191.1 L464.6,196.0 L467.7,201.0 L467.1,204.7 L464.0,209.7 L461.5,214.7 L460.9,218.4 L458.4,222.1 L454.7,224.0 L455.3,229.6 L454.7,234.5 L454.0,240.7 L452.2,245.7 L450.3,249.4 L449.1,253.2 L450.3,256.9 L453.4,260.0M452.4,257.5 L453.7,261.2 L452.4,264.9 L448.1,265.5 L443.7,265.5 L440.0,268.6 L437.5,272.4 L436.3,276.7 L435.4,281.1 L436.3,286.0 L436.9,291.0 L438.1,296.0 L438.8,300.9 L438.1,305.9 L437.5,310.9 L438.8,314.6 L441.9,317.1 L444.3,320.2 L444.1,323.9 L441.2,326.4 L439.4,329.5 L441.2,333.2 L442.5,338.2 L441.9,343.2 L440.6,348.1 L439.4,350.0M441.9,341.2 L441.2,345.6 L438.8,349.3 L435.7,356.1 L435.0,362.4 L434.4,366.7 L432.5,369.8 L429.7,366.7M494.4,162.1 L499.4,166.2 L508.1,169.3 L516.8,174.9 L519.9,181.1 L521.1,188.6 L524.2,193.5 L526.7,198.5 L528.0,203.5 L526.7,208.4 L529.2,213.4 L532.3,217.8 L534.2,220.2M505.6,162.1 L509.3,165.0 L514.3,165.6 L517.4,163.1 L518.6,162.1M560.0,164.9 L567.5,174.8 L571.2,189.8 L579.9,207.1 L587.3,224.5 L594.8,237.0 L594.8,245.7 L604.7,251.9 L610.9,259.3 L609.7,269.3 L606.0,281.7 L601.0,294.1 L594.8,309.0 L591.1,315.2M597.3,350.0 L601.0,359.9 L603.5,367.4 L601.7,373.6M569.9,374.8 L577.4,369.9 L584.8,371.1 L593.5,374.8 L601.7,373.6 L608.4,377.3 L609.7,384.8 L614.7,392.2 L617.6,397.7M560.0,407.6 L569.9,405.9 L579.9,403.4 L587.3,405.9 L597.3,409.6 L604.7,412.1 L609.7,405.9 L617.6,397.7 L627.1,399.7 L634.5,402.2 L642.0,398.4 L649.4,402.2 L653.2,409.6 L655.7,417.1 L661.9,422.0 L669.3,428.3 L676.8,432.0 L683.0,437.0 L681.7,443.2 L673.0,445.7 L669.3,449.4 L673.0,456.8 L676.8,464.3 L680.5,466.3M604.7,412.1 L602.7,420.8 L604.7,424.5 L599.3,432.0 L597.3,441.9 L592.3,448.1 L584.8,451.9 L577.4,453.9 L571.2,449.4 L565.0,445.7 L560.0,444.4M577.4,453.9 L581.1,464.3 L584.8,474.2 L583.6,480.4 L578.6,486.6 L583.6,492.9 L584.8,499.1 L592.3,492.9 L602.2,489.1 L612.2,487.9 L624.6,488.6 L634.5,490.4 L642.0,487.9 L650.7,485.4 L655.7,486.6 L661.9,484.2 L669.3,485.4 L670.6,479.2 L669.3,471.7 L674.3,468.0 L680.5,466.3 L686.7,459.3 L694.2,456.8 L702.9,453.9 L709.1,459.3 L714.0,466.8 L716.5,471.7 L725.2,471.2 L731.4,474.2 L736.4,481.7 L743.9,480.4 L751.3,479.2 L758.8,474.2 L766.2,479.2 L776.1,477.2 L786.1,476.7 L794.8,478.0 L798.5,485.4 L799.8,492.9 L804.7,501.6 L802.2,510.2 L796.0,516.5 L791.1,523.9 L789.8,530.1 L793.5,533.9M584.8,499.1 L587.3,509.0 L593.5,518.9 L589.8,528.9 L584.8,538.8 L582.4,548.8M545.0,432.1 L552.6,434.6 L559.3,434.6 L563.6,438.0 L564.4,444.7 L561.9,449.0M529.0,450.6 L540.8,449.8 L550.9,449.0 L561.9,449.0 L567.8,450.6 L572.8,454.0M617.5,398.4 L625.1,399.2 L631.8,400.9 L636.0,402.6 L640.3,399.2 L647.0,400.1 L652.1,404.3 L652.9,411.0 L657.1,416.9 L660.0,418.6M399.0,448.6 L404.6,449.9 L410.8,451.1 L414.5,451.4M382.9,479.7 L382.9,484.7 L381.6,489.6 L379.8,494.6 L378.5,499.6 L377.3,503.3 L374.8,507.0 L372.3,510.7 L371.1,515.7 L368.6,519.4 L366.7,524.4 L365.5,530.0M468.0,471.0 L469.2,476.0 L469.8,482.2 L471.7,488.4 L473.5,494.6 L474.2,499.6 L474.8,504.5 L475.4,509.5 L476.6,514.5 L480.0,517.0M323.1,521.1 L325.6,528.7 L331.5,533.7 L338.2,540.5 L345.0,545.5 L351.7,548.9 L358.5,553.9 L365.2,557.3 L371.9,560.7 L378.7,564.1 L390.0,567.4M364.4,525.3 L366.9,533.7 L369.4,540.5 L365.2,545.5 L361.8,550.6 L362.7,555.6 L368.6,557.3M334.9,516.0 L341.6,515.2 L348.3,516.9 L355.1,516.0 L361.8,517.7 L364.4,525.3M139.6,673.9 L147.2,673.1 L148.0,678.2 L153.9,680.7 L162.4,679.8 L169.1,681.5 L170.8,687.4 L174.2,690.8 L170.8,694.2 L164.9,697.5 L161.5,702.6 L161.5,709.3 L158.2,716.1 L155.6,721.1 L149.7,724.5 L148.0,727.9 L149.7,732.9 L150.6,738.0 L148.9,743.1 L145.5,748.1 L146.4,755.0M147.8,724.9 L149.1,728.6 L151.6,734.8 L149.1,741.0 L145.3,748.5 L146.6,755.9 L142.9,760.9 L139.1,765.9 L138.4,772.1M246.7,668.0 L250.0,673.9 L256.8,678.2 L263.5,681.5 L271.9,684.9 L278.7,684.1 L285.4,685.7 L290.0,687.4M258.5,680.0 L267.0,682.5 L275.4,685.1 L283.8,685.9 L290.6,688.4 L297.3,691.0 L305.7,693.5 L314.2,696.0M372.6,561.7 L381.0,564.2 L391.1,567.6 L392.0,571.8 L387.8,576.0 L386.9,579.4M373.4,630.8 L374.3,639.2 L370.1,644.3 L371.8,651.0 L374.3,657.8 L377.7,663.7 L382.7,665.4 L381.9,670.4M360.8,623.2 L364.2,618.2 L362.5,615.6 L365.9,610.6 L367.5,613.9 L372.6,628.3M451.8,560.0 L458.6,565.1 L467.0,570.1 L468.7,574.3 L463.6,576.0 L456.9,581.9 L454.4,587.0 L457.7,591.2 L456.9,596.2 L451.8,594.6M451.8,614.3 L458.6,615.6 L467.0,616.5 L473.7,615.6M452.0,614.2 L463.8,616.7 L475.6,617.6 L487.4,615.9 L494.2,613.4 L504.3,611.7M504.3,612.5 L511.0,620.1 L521.1,626.0 L531.3,626.9 L541.4,624.3 L553.2,618.4 L563.3,615.1 L570.0,610.0M468.0,637.0 L475.6,637.8 L487.4,638.7 L494.2,637.0 L499.2,642.0 L507.7,642.0 L517.8,640.3 L527.9,639.5 L538.0,638.7 L544.7,642.0M499.2,642.9 L500.9,650.5 L506.0,658.9 L512.7,665.6 L519.5,671.5 L527.9,677.4 L534.6,683.3 L541.4,689.2 L544.7,692.6M541.4,625.2 L544.7,633.6 L548.1,642.0 L546.4,648.8 L551.5,655.5 L554.9,660.6 L553.2,667.3 L549.8,670.7 L544.7,675.7 L541.4,682.5 L543.1,690.9M549.8,670.7 L558.2,675.7 L566.7,679.1 L572.6,674.9 L578.5,675.7 L586.9,680.0 L590.3,684.2 L588.6,689.2 L598.7,687.5M553.2,700.2 L556.5,692.6 L559.9,687.5 L565.0,688.4 L566.7,680.0M566.7,680.0 L570.0,684.2 L573.4,692.6 L575.1,696.0 L581.8,692.6 L588.6,689.2M584.4,719.6 L582.7,728.0 L578.5,734.7 L575.9,739.8 L573.4,745.0M560.0,566.1 L569.9,567.4 L577.4,568.6 L589.8,572.9 L609.7,571.1 L618.4,573.6 L627.1,568.6 L634.5,562.4 L639.5,557.5 L648.2,552.0 L659.4,553.0 L669.3,557.5 L674.3,563.7 L681.7,572.4 L688.0,579.8 L691.7,584.8 L684.2,583.5 L678.0,584.8 L675.5,591.0 L676.8,597.2 L673.0,603.4 L670.6,608.4M639.5,557.5 L645.7,563.7 L653.2,572.4 L659.4,579.8 L665.6,587.3 L668.1,597.2 L669.3,605.9 L673.0,609.6 L681.7,610.9 L689.2,608.4 L691.7,603.4M577.4,568.6 L583.6,574.8 L578.6,584.8 L574.9,594.7 L571.2,607.1 L566.2,613.4 L560.0,615.8M560.0,617.1 L567.5,624.5 L574.9,632.0 L581.1,639.4 L589.8,641.9 L597.3,640.7 L599.8,645.7 L597.3,649.4 L604.7,653.1 L617.1,652.4 L632.0,651.9 L642.0,649.4 L649.4,643.2 L656.9,638.2 L666.8,637.0 L676.8,638.2 L683.0,640.7M597.3,649.4 L594.8,656.8 L601.0,664.3 L606.0,669.3 L601.0,676.7 L599.8,684.2 L602.2,686.6 L607.2,691.6 L610.9,699.1 L604.7,705.3 L612.2,702.8 L622.1,699.1 L632.0,696.6 L642.0,697.8 L651.9,695.3 L658.1,692.9 L659.4,685.4 L665.6,680.4 L674.3,676.7 L683.0,676.7M658.1,692.9 L661.9,687.9 L664.3,694.1 L663.1,701.6 L664.3,709.0 L668.1,715.2M602.2,686.6 L589.8,690.4 L579.9,694.1 L574.9,701.6 L574.9,709.0 L579.9,717.7 L584.8,721.4 L597.3,716.5 L607.2,709.0 L610.9,699.1M842.1,588.5 L850.6,586.8 L860.7,586.0 L870.8,583.4 L880.9,580.6 L889.3,581.8 L897.8,583.4 L902.8,580.9 L907.9,576.7 L914.6,574.2 L921.4,573.3 L925.6,574.2 L926.4,578.4 L933.2,580.1 L939.9,579.2 L946.7,578.4 L953.4,580.9 L958.5,583.4 L963.5,580.9 L966.0,574.2 L967.7,567.4 L966.9,564.9M939.9,580.1 L938.2,584.3 L943.3,586.8 L948.3,589.3 L947.5,593.6 L941.6,595.2 L934.9,595.2 L928.1,596.9 L925.6,601.1 L921.4,604.5 L916.3,607.9 L911.3,611.3 L907.9,613.8M877.5,618.8 L884.3,614.6 L891.9,611.3 L899.5,612.1 L904.5,613.8 L907.9,614.6 L912.1,618.0 L913.8,624.7 L917.2,629.8 L921.4,631.5M926.4,601.1 L933.2,603.7 L936.5,607.9 L939.9,612.1 L946.7,614.6 L948.3,618.0 L945.0,620.5 L951.7,621.4 L958.5,622.2 L961.8,626.4 L964.4,631.5M1015.7,162.0 L1013.2,166.6 L1005.5,171.6 L1001.7,178.0 L1000.9,188.2 L996.6,200.9 L991.5,213.7 L987.7,223.8 L981.3,231.5 L975.0,241.7 L969.9,251.9 L962.2,257.0 L967.3,262.0 L975.0,272.2 L978.8,277.3 L976.2,282.4 L980.1,292.6 L982.6,300.2 L990.2,301.5 L999.2,299.0 L1004.2,302.8 L1005.5,311.7 L1000.4,318.1 L994.1,319.3M957.1,350.0 L955.9,355.1 L941.9,360.2 L944.4,366.6 L924.0,360.2 L908.8,364.0 L894.7,374.2 L890.9,383.1 L885.8,393.3 L883.3,406.0 L887.1,413.7 L878.2,417.5 L871.8,423.8 L873.1,434.0 L878.2,441.7 L880.7,454.4 L890.9,462.0 L896.0,465.9 L906.2,462.0 L916.4,465.9 L924.0,473.5 L922.8,477.3 L931.7,478.6M1102.3,418.8 L1084.5,415.7 L1064.1,416.7 L1046.3,418.8 L1041.2,423.8 L1031.0,436.6 L1023.3,446.8 L1028.4,457.0 L1041.2,477.3 L1053.9,497.7 L1064.1,511.7M1018.3,162.0 L1025.9,165.3 L1033.5,172.4 L1041.2,165.8 L1046.8,162.0M840.0,738.4 L850.2,732.1 L862.9,725.7 L875.7,724.4 L885.8,718.1 L893.5,709.2 L903.7,702.8 L916.4,696.4 L924.0,688.8 L931.7,685.0 L945.7,681.1 L950.8,684.5 L954.6,678.6M920.2,694.6 L913.8,709.8 L912.6,720.0 L916.4,730.2 L920.2,742.9 L921.5,753.1 L913.8,763.3 L903.7,776.0 L893.5,791.3 L883.3,804.1 L878.2,812.0M893.5,791.3 L899.8,802.8 L908.8,809.1 L926.6,806.6 L944.4,807.9 L959.7,812.0M840.0,783.7 L847.6,781.1 L852.7,787.5 L850.2,796.4 L847.6,804.1 L846.4,812.0M784.8,793.2 L793.5,789.5 L802.2,785.7 L809.7,780.8M464.1,530.0 L460.7,532.5 L455.6,536.7 L448.9,540.1 L444.7,542.6 L446.4,548.5 L449.7,555.3 L453.9,561.2 L460.7,567.1 L465.7,571.3 L469.1,573.8 L474.2,572.1 L479.2,567.9 L484.3,566.2 L491.0,566.2 L496.9,567.9 L501.1,566.2 L507.9,566.2 L512.9,566.2 L518.0,565.4 L521.4,560.3 L525.6,555.3 L529.8,551.9 L532.3,551.1M487.7,530.0 L494.4,531.7 L498.6,535.1 L501.1,540.1 L506.2,536.7 L511.3,537.6 L516.3,536.7 L518.0,541.0 L524.7,542.6 L529.8,546.9 L532.3,551.1 L536.5,549.4 L539.9,548.5 L543.3,551.9 L545.0,555.3 L548.3,555.3 L551.7,552.8 L558.5,550.2 L565.2,548.5 L571.9,548.5 L577.0,551.1 L580.4,553.6 L582.9,548.5 L582.1,543.5 L581.2,538.4 L583.7,533.4 L586.3,530.0M518.0,565.4 L518.8,570.5 L521.4,574.7 L524.7,578.9 L529.8,580.6 L534.9,579.7 L537.4,577.2 L543.3,575.5 L548.3,574.7 L552.6,571.3 L556.8,567.9 L561.8,566.2 L568.6,566.2 L575.3,567.9 L578.7,566.2 L580.4,562.9 L581.2,557.8 L580.4,553.6M469.1,573.8 L464.9,576.4 L459.8,578.9 L455.6,583.1 L453.9,586.5 L456.5,590.7 L458.2,594.9 L455.6,596.6 L452.3,594.9M521.4,574.7 L518.0,578.9 L514.6,582.3 L509.6,584.8 L506.2,588.2 L505.4,594.1 L504.5,600.8 L502.8,605.9 L501.1,608.4 L494.4,612.6 L487.7,615.1M450.6,615.1 L457.3,616.0 L464.1,616.8M580.4,562.9 L585.4,566.2 L590.0,571.3M590.0,572.1 L585.4,575.5 L581.2,580.6 L578.7,585.6 L577.0,592.4 L575.3,599.1 L571.9,605.0 L568.6,610.1 L566.0,613.4 L560.1,616.0 L555.1,616.0M555.1,616.0 L561.8,617.7 L568.6,619.3 L570.3,624.4 L575.3,627.8 L578.7,631.1 L577.8,636.2 L582.1,639.6 L590.0,642.1M541.6,624.4 L543.3,631.1 L546.7,634.5 L545.0,639.6 L548.3,644.6 L547.5,651.4 L550.0,658.1 L553.4,665.0M475.0,638.7 L480.9,640.4 L487.7,638.7 L493.6,635.4 L496.9,631.1 L499.5,627.8 L502.8,624.4 L506.2,621.9 L508.7,617.7M498.6,643.8 L501.1,648.0 L499.5,653.1 L502.8,658.1 L507.9,663.2M540.5,416.9 L544.2,411.9 L550.9,408.5 L559.3,407.3M599.8,336.0 L597.3,341.9 L596.4,348.7M462.6,529.4 L476.3,527.6 L487.5,530.6M833.1,758.2 L838.2,756.9 L840.7,749.3 L838.2,742.9 L839.5,737.8 L843.0,737.0" fill="none" stroke="#fff" stroke-width="0.95" stroke-dasharray="2.6,2" stroke-linejoin="round" opacity="0.9"/>
<g clip-path="url(#gc)">
<path d="M447.1,-387.3L439.5,-350.9L431.9,-314.2L424.4,-277.2L417.0,-240.0M184.0,-397.3L217.9,-376.6L251.6,-355.2M40.8,-398.2L79.1,-385.4L117.2,-371.8L155.2,-357.6L193.1,-342.7L230.9,-327.2M-392.6,-356.6L-352.5,-358.2L-312.2,-358.9L-271.8,-358.8L-231.2,-357.8L-190.7,-356.1L-150.0,-353.5L-109.3,-350.2L-68.6,-346.1L-27.9,-341.2L12.9,-335.6L53.6,-329.2L94.3,-322.1L134.9,-314.3L175.5,-305.8L216.0,-296.5M-372.7,-233.8L-332.2,-241.0L-291.6,-247.4L-250.7,-253.0L-209.6,-257.8L-168.4,-261.8L-127.0,-265.1L-85.5,-267.6L-43.8,-269.3L-2.1,-270.3L39.7,-270.5L81.6,-270.0L123.5,-268.8L165.5,-266.8L207.5,-264.2L249.5,-260.7L291.4,-256.6L333.3,-251.8L375.2,-246.3L417.0,-240.0M-368.4,-111.1L-329.1,-124.4L-289.4,-136.9L-249.4,-148.8L-209.1,-159.9L-168.6,-170.2L-127.8,-179.9L-86.7,-188.8L-45.5,-197.0L-4.1,-204.5L37.5,-211.2L79.3,-217.3L121.2,-222.6L163.2,-227.2L205.4,-231.1M-378.1,25.9L-341.2,6.4L-304.0,-12.4L-266.4,-30.6L-228.4,-48.2L-190.0,-65.1L-151.3,-81.4L-112.3,-97.1L-72.9,-112.1L-33.3,-126.4L6.6,-140.1L46.8,-153.1L87.2,-165.4L127.8,-177.1L168.6,-188.2L209.7,-198.5M-393.0,190.6L-360.2,165.2L-327.0,140.3L-293.2,115.9L-259.0,92.1L-224.3,68.8L-189.2,46.0L-153.8,23.8L-117.9,2.1L-81.6,-19.0L-45.0,-39.5L-8.0,-59.5L29.3,-79.0L66.9,-97.8L104.8,-116.0L143.0,-133.7L181.4,-150.8L220.1,-167.2M-399.3,392.2L-371.8,361.8L-343.8,331.6L-315.2,301.9L-286.2,272.5L-256.6,243.6L-226.6,215.0L-196.1,186.8L-165.2,159.1L-133.8,131.8L-102.0,104.9L-69.8,78.4L-37.2,52.4L-4.2,26.9L29.2,1.8L62.9,-22.7L97.0,-46.8L131.4,-70.4L166.1,-93.5L201.1,-116.1L236.4,-138.1M-379.9,634.5L-358.6,600.2L-336.8,566.1L-314.4,532.2L-291.5,498.5L-268.1,465.0L-244.2,431.8L-219.9,398.9L-195.0,366.2L-169.7,333.8L-144.0,301.7L-117.8,269.8L-91.2,238.3L-64.1,207.1L-36.7,176.2L-8.8,145.7L19.4,115.5L48.0,85.7L77.0,56.2L106.3,27.2L136.0,-1.5L166.0,-29.8L196.3,-57.6L227.0,-85.1L257.9,-112.1M-395.5,1133.6L-384.1,1097.0L-372.1,1060.4L-359.5,1023.7L-346.3,987.1L-332.7,950.5L-318.4,913.9L-303.7,877.3L-288.5,840.7L-272.7,804.3L-256.5,767.8L-239.7,731.5L-222.5,695.2L-204.9,659.1L-186.8,623.0L-168.2,587.1L-149.2,551.2L-129.8,515.6L-109.9,480.0L-89.7,444.7L-69.0,409.5L-47.9,374.5L-26.5,339.6L-4.7,305.0L17.5,270.6L40.1,236.5L63.0,202.6L86.3,168.9L109.9,135.5L133.8,102.4L158.1,69.6L182.6,37.1L207.5,4.8L232.7,-27.0L258.2,-58.6L284.0,-89.8M-219.0,1293.6L-211.4,1256.8L-203.4,1219.9L-194.9,1182.8L-185.9,1145.6L-176.6,1108.4L-166.8,1071.0L-156.5,1033.6L-145.9,996.0L-134.8,958.4L-123.4,920.8L-111.5,883.1L-99.3,845.4L-86.7,807.7L-73.7,770.0L-60.3,732.3L-46.6,694.6L-32.6,656.9L-18.2,619.3L-3.4,581.7L11.7,544.2L27.1,506.8L42.8,469.4L58.9,432.2L75.2,395.1L91.9,358.1L108.9,321.2L126.1,284.5L143.7,247.9L161.5,211.5L179.6,175.3L198.0,139.3L216.7,103.5L235.6,68.0L254.8,32.7L274.2,-2.4L293.9,-37.3L313.8,-71.8M-1.8,1281.6L3.8,1244.2L9.8,1206.7L16.0,1169.0L22.5,1131.1L29.3,1093.1L36.4,1055.0L43.8,1016.7L51.4,978.3L59.3,939.8L67.5,901.2L76.0,862.6L84.7,823.8L93.6,785.0L102.8,746.2L112.2,707.3L121.9,668.4L131.8,629.5L142.0,590.6L152.3,551.7L162.9,512.8L173.8,474.0L184.8,435.2L196.1,396.5L207.5,357.9L219.2,319.3L231.1,280.9L243.1,242.5L255.4,204.3L267.9,166.3L280.5,128.3L293.4,90.6L306.4,53.0L319.6,15.6L333.0,-21.6L346.6,-58.6M208.9,1281.1L211.8,1243.4L214.9,1205.5L218.2,1167.3L221.6,1129.0L225.1,1090.5L228.8,1051.8L232.6,1012.9L236.6,974.0L240.7,934.9L244.9,895.6L249.3,856.3L253.8,816.8L258.4,777.3L263.1,737.7L268.0,698.1L272.9,658.4L278.0,618.6L283.3,578.9L288.6,539.1L294.0,499.3L299.6,459.6L305.3,419.8L311.0,380.1L316.9,340.5L322.9,300.9L329.0,261.4L335.2,222.0L341.5,182.6L347.9,143.4L354.4,104.3L361.0,65.4L367.6,26.5L374.4,-12.1L381.3,-50.6L388.3,-88.9L395.3,-127.0L402.4,-164.9L409.7,-202.6L417.0,-240.0M417.0,1293.4L417.0,1255.6L417.0,1217.6L417.0,1179.4L417.0,1140.9L417.0,1102.3L417.0,1063.5L417.0,1024.5L417.0,985.4L417.0,946.1L417.0,906.7L417.0,867.1L417.0,827.5L417.0,787.7L417.0,747.9L417.0,708.0L417.0,668.0L417.0,628.0L417.0,588.0L417.0,547.9L417.0,507.8L417.0,467.7L417.0,427.6L417.0,387.6L417.0,347.6L417.0,307.6L417.0,267.7L417.0,227.9L417.0,188.1L417.0,148.5L417.0,108.9L417.0,69.5L417.0,30.2L417.0,-8.9L417.0,-47.9M625.1,1281.1L622.2,1243.4L619.1,1205.5L615.8,1167.3L612.4,1129.0L608.9,1090.5L605.2,1051.8L601.4,1012.9L597.4,974.0L593.3,934.9L589.1,895.6L584.7,856.3L580.2,816.8L575.6,777.3L570.9,737.7L566.0,698.1L561.1,658.4L556.0,618.6L550.7,578.9L545.4,539.1L540.0,499.3L534.4,459.6L528.7,419.8L523.0,380.1L517.1,340.5L511.1,300.9L505.0,261.4L498.8,222.0L492.5,182.6L486.1,143.4L479.6,104.3L473.0,65.4L466.4,26.5L459.6,-12.1L452.7,-50.6M835.8,1281.6L830.2,1244.2L824.2,1206.7L818.0,1169.0L811.5,1131.1L804.7,1093.1L797.6,1055.0L790.2,1016.7L782.6,978.3L774.7,939.8L766.5,901.2L758.0,862.6L749.3,823.8L740.4,785.0L731.2,746.2L721.8,707.3L712.1,668.4L702.2,629.5L692.0,590.6L681.7,551.7L671.1,512.8L660.2,474.0L649.2,435.2L637.9,396.5L626.5,357.9L614.8,319.3L602.9,280.9L590.9,242.5L578.6,204.3L566.1,166.3L553.5,128.3L540.6,90.6L527.6,53.0L514.4,15.6L501.0,-21.6L487.4,-58.6M1053.0,1293.6L1045.4,1256.8L1037.4,1219.9L1028.9,1182.8L1019.9,1145.6L1010.6,1108.4L1000.8,1071.0L990.5,1033.6L979.9,996.0L968.8,958.4L957.4,920.8L945.5,883.1L933.3,845.4L920.7,807.7L907.7,770.0L894.3,732.3L880.6,694.6L866.6,656.9L852.2,619.3L837.4,581.7L822.3,544.2L806.9,506.8L791.2,469.4L775.1,432.2L758.8,395.1L742.1,358.1L725.1,321.2L707.9,284.5L690.3,247.9L672.5,211.5L654.4,175.3L636.0,139.3L617.3,103.5L598.4,68.0L579.2,32.7L559.8,-2.4L540.1,-37.3L520.2,-71.8M1269.3,1279.7L1260.2,1243.2L1250.6,1206.7L1240.4,1170.2L1229.5,1133.6L1218.1,1097.0L1206.1,1060.4L1193.5,1023.7L1180.3,987.1L1166.7,950.5L1152.4,913.9L1137.7,877.3L1122.5,840.7L1106.7,804.3L1090.5,767.8L1073.7,731.5L1056.5,695.2L1038.9,659.1L1020.8,623.0L1002.2,587.1L983.2,551.2L963.8,515.6L943.9,480.0L923.7,444.7L903.0,409.5L881.9,374.5L860.5,339.6L838.7,305.0L816.5,270.6L793.9,236.5L771.0,202.6L747.7,168.9L724.1,135.5L700.2,102.4L675.9,69.6L651.4,37.1L626.5,4.8L601.3,-27.0L575.8,-58.6L550.0,-89.8M1470.2,1204.2L1459.4,1167.8L1447.8,1131.5L1435.5,1095.2L1422.5,1059.1L1408.7,1023.0L1394.3,987.0L1379.1,951.2L1363.2,915.4L1346.7,879.8L1329.6,844.3L1311.8,808.9L1293.4,773.7L1274.4,738.6L1254.8,703.8L1234.6,669.0L1213.9,634.5L1192.6,600.2L1170.8,566.1L1148.4,532.2L1125.5,498.5L1102.1,465.0L1078.2,431.8L1053.9,398.9L1029.0,366.2L1003.7,333.8L978.0,301.7L951.8,269.8L925.2,238.3L898.1,207.1L870.7,176.2L842.8,145.7L814.6,115.5L786.0,85.7L757.0,56.2L727.7,27.2L698.0,-1.5L668.0,-29.8L637.7,-57.6L607.0,-85.1L576.1,-112.1M1588.2,923.6L1571.4,888.3L1553.8,853.2L1535.4,818.4L1516.2,783.8L1496.3,749.5L1475.7,715.5L1454.4,681.8L1432.3,648.4L1409.6,615.2L1386.3,582.4L1362.3,549.9L1337.7,517.7L1312.5,485.8L1286.7,454.3L1260.3,423.1L1233.3,392.2L1205.8,361.8L1177.8,331.6L1149.2,301.9L1120.2,272.5L1090.6,243.6L1060.6,215.0L1030.1,186.8L999.2,159.1L967.8,131.8L936.0,104.9L903.8,78.4L871.2,52.4L838.2,26.9L804.8,1.8L771.1,-22.7L737.0,-46.8L702.6,-70.4L667.9,-93.5L632.9,-116.1L597.6,-138.1M1576.2,533.4L1550.6,502.3L1524.3,471.5L1497.4,441.3L1469.8,411.5L1441.5,382.2L1412.6,353.4L1383.1,325.0L1353.0,297.1L1322.3,269.7L1291.1,242.9L1259.3,216.5L1227.0,190.6L1194.2,165.2L1161.0,140.3L1127.2,115.9L1093.0,92.1L1058.3,68.8L1023.2,46.0L987.8,23.8L951.9,2.1L915.6,-19.0L879.0,-39.5L842.0,-59.5L804.7,-79.0L767.1,-97.8L729.2,-116.0L691.0,-133.7L652.6,-150.8L613.9,-167.2M1584.1,282.0L1553.1,255.6L1521.5,229.8L1489.3,204.6L1456.5,180.1L1423.2,156.2L1389.2,132.9L1354.8,110.2L1319.8,88.2L1284.4,66.8L1248.4,46.1L1212.1,25.9L1175.2,6.4L1138.0,-12.4L1100.4,-30.6L1062.4,-48.2L1024.0,-65.1L985.3,-81.4L946.3,-97.1L906.9,-112.1L867.3,-126.4L827.4,-140.1L787.2,-153.1L746.8,-165.4L706.2,-177.1L665.4,-188.2L624.3,-198.5L583.1,-208.2L541.8,-217.2L500.3,-225.5L458.7,-233.1L417.0,-240.0M1573.9,62.7L1538.9,41.9L1503.3,21.9L1467.3,2.6L1430.7,-15.9L1393.7,-33.6L1356.2,-50.6L1318.4,-66.9L1280.1,-82.4L1241.4,-97.1L1202.4,-111.1L1163.1,-124.4L1123.4,-136.9L1083.4,-148.8L1043.1,-159.9L1002.6,-170.2L961.8,-179.9L920.7,-188.8L879.5,-197.0L838.1,-204.5L796.5,-211.2L754.7,-217.3L712.8,-222.6L670.8,-227.2L628.6,-231.1M1594.6,-115.8L1557.5,-131.6L1519.9,-146.4L1481.9,-160.3L1443.6,-173.4L1404.9,-185.5L1365.9,-196.9L1326.5,-207.4L1286.8,-217.0L1246.9,-225.8L1206.7,-233.8L1166.2,-241.0L1125.6,-247.4L1084.7,-253.0L1043.6,-257.8L1002.4,-261.8L961.0,-265.1L919.5,-267.6L877.8,-269.3L836.1,-270.3L794.3,-270.5L752.4,-270.0L710.5,-268.8L668.5,-266.8L626.5,-264.2M1579.8,-301.8L1541.5,-311.7L1503.0,-320.6L1464.1,-328.5L1425.1,-335.5L1385.8,-341.5L1346.3,-346.7L1306.6,-350.9L1266.7,-354.2L1226.6,-356.6L1186.5,-358.2L1146.2,-358.9L1105.8,-358.8L1065.2,-357.8L1024.7,-356.1L984.0,-353.5L943.3,-350.2L902.6,-346.1L861.9,-341.2L821.1,-335.6L780.4,-329.2L739.7,-322.1L699.1,-314.3L658.5,-305.8L618.0,-296.5M793.2,-398.2L754.9,-385.4L716.8,-371.8L678.8,-357.6L640.9,-342.7L603.1,-327.2M650.0,-397.3L616.1,-376.6L582.4,-355.2M1317.2,1295.6L1356.3,1274.3L1394.8,1251.9L1432.8,1228.5L1470.2,1204.2L1506.9,1178.8L1543.0,1152.5L1578.4,1125.1M-395.5,1133.6L-358.0,1152.8L-320.0,1171.0L-281.6,1188.3L-242.7,1204.6L-203.4,1219.9L-163.7,1234.2L-123.7,1247.5L-83.4,1259.8L-42.7,1271.2L-1.8,1281.6L39.4,1290.9L80.8,1299.3M753.2,1299.3L794.6,1290.9L835.8,1281.6L876.7,1271.2L917.4,1259.8L957.7,1247.5L997.7,1234.2L1037.4,1219.9L1076.7,1204.6L1115.6,1188.3L1154.0,1171.0L1192.0,1152.8L1229.5,1133.6L1266.5,1113.4L1302.9,1092.3L1338.8,1070.2L1374.1,1047.1L1408.7,1023.0L1442.7,998.0L1476.0,972.0L1508.6,945.1L1540.4,917.1L1571.4,888.3M-399.6,910.7L-366.4,931.1L-332.7,950.5L-298.4,969.0L-263.6,986.5L-228.3,1003.1L-192.6,1018.8L-156.5,1033.6L-120.0,1047.4L-83.2,1060.2L-46.0,1072.1L-8.5,1083.1L29.3,1093.1L67.4,1102.2L105.6,1110.3L144.1,1117.5L182.8,1123.7L221.6,1129.0L260.5,1133.3L299.5,1136.6L338.7,1139.0L377.8,1140.5L417.0,1140.9L456.2,1140.5L495.3,1139.0L534.5,1136.6L573.5,1133.3L612.4,1129.0L651.2,1123.7L689.9,1117.5L728.4,1110.3L766.6,1102.2L804.7,1093.1L842.5,1083.1L880.0,1072.1L917.2,1060.2L954.0,1047.4L990.5,1033.6L1026.6,1018.8L1062.3,1003.1L1097.6,986.5L1132.4,969.0L1166.7,950.5L1200.4,931.1L1233.6,910.7L1266.2,889.5L1298.2,867.3L1329.6,844.3L1360.3,820.3L1390.3,795.4L1419.5,769.7L1448.0,743.0L1475.7,715.5L1502.5,687.1L1528.5,657.9L1553.6,627.8L1577.8,596.8M-373.0,690.5L-344.8,711.1L-315.9,730.8L-286.4,749.8L-256.5,767.8L-226.0,785.1L-195.0,801.5L-163.5,817.0L-131.6,831.6L-99.3,845.4L-66.6,858.4L-33.5,870.4L-0.1,881.6L33.5,891.8L67.5,901.2L101.7,909.7L136.2,917.4L170.9,924.1L205.7,929.9L240.7,934.9L275.8,938.9L311.0,942.0L346.3,944.3L381.6,945.6L417.0,946.1L452.4,945.6L487.7,944.3L523.0,942.0L558.2,938.9L593.3,934.9L628.3,929.9L663.1,924.1L697.8,917.4L732.3,909.7L766.5,901.2L800.5,891.8L834.1,881.6L867.5,870.4L900.6,858.4L933.3,845.4L965.6,831.6L997.5,817.0L1029.0,801.5L1060.0,785.1L1090.5,767.8L1120.4,749.8L1149.9,730.8L1178.8,711.1L1207.0,690.5L1234.6,669.0L1261.6,646.8L1287.9,623.8L1313.5,599.9L1338.3,575.3L1362.3,549.9L1385.5,523.7L1407.9,496.8L1429.5,469.1L1450.1,440.7L1469.8,411.5L1488.5,381.7L1506.2,351.1L1522.9,319.9L1538.6,288.1L1553.1,255.6L1566.6,222.5L1578.8,188.8L1589.9,154.5L1599.8,119.7M-399.3,392.2L-379.2,414.8L-358.3,436.8L-336.7,458.0L-314.4,478.6L-291.5,498.5L-268.0,517.6L-243.9,536.1L-219.2,553.8L-193.9,570.8L-168.2,587.1L-142.0,602.5L-115.2,617.3L-88.1,631.3L-60.5,644.5L-32.6,656.9L-4.2,668.6L24.4,679.4L53.4,689.5L82.7,698.8L112.2,707.3L142.0,715.0L172.0,721.9L202.2,728.0L232.6,733.3L263.1,737.7L293.7,741.4L324.5,744.2L355.3,746.3L386.1,747.5L417.0,747.9L447.9,747.5L478.7,746.3L509.5,744.2L540.3,741.4L570.9,737.7L601.4,733.3L631.8,728.0L662.0,721.9L692.0,715.0L721.8,707.3L751.3,698.8L780.6,689.5L809.6,679.4L838.2,668.6L866.6,656.9L894.5,644.5L922.1,631.3L949.2,617.3L976.0,602.5L1002.2,587.1L1027.9,570.8L1053.2,553.8L1077.9,536.1L1102.0,517.6L1125.5,498.5L1148.4,478.6L1170.7,458.0L1192.3,436.8L1213.2,414.8L1233.3,392.2L1252.7,369.0L1271.4,345.1L1289.2,320.6L1306.2,295.5L1322.3,269.7L1337.6,243.5L1351.9,216.6L1365.3,189.2L1377.8,161.3L1389.2,132.9L1399.7,104.0L1409.1,74.6L1417.4,44.9L1424.6,14.7L1430.7,-15.9L1435.7,-46.8L1439.5,-78.0L1442.1,-109.6L1443.5,-141.4L1443.6,-173.4L1442.5,-205.6L1440.1,-237.9L1436.4,-270.4L1431.4,-302.9L1425.1,-335.5L1417.4,-368.1M-385.4,-382.6L-392.6,-356.6L-398.8,-330.5M-398.4,-47.0L-392.5,-22.4L-385.7,1.9L-378.1,25.9L-369.5,49.6L-360.1,72.9L-349.9,95.8L-338.8,118.2L-327.0,140.3L-314.3,161.9L-301.0,183.0L-286.9,203.7L-272.1,223.9L-256.6,243.6L-240.5,262.7L-223.7,281.3L-206.3,299.4L-188.3,316.9L-169.7,333.8L-150.6,350.1L-130.9,365.9L-110.8,381.0L-90.1,395.6L-69.0,409.5L-47.4,422.7L-25.4,435.4L-3.1,447.4L19.7,458.7L42.8,469.4L66.3,479.5L90.0,488.8L114.1,497.5L138.4,505.5L162.9,512.8L187.7,519.5L212.7,525.4L237.8,530.7L263.2,535.2L288.6,539.1L314.1,542.3L339.8,544.7L365.5,546.5L391.2,547.5L417.0,547.9L442.8,547.5L468.5,546.5L494.2,544.7L519.9,542.3L545.4,539.1L570.8,535.2L596.2,530.7L621.3,525.4L646.3,519.5L671.1,512.8L695.6,505.5L719.9,497.5L744.0,488.8L767.7,479.5L791.2,469.4L814.3,458.7L837.1,447.4L859.4,435.4L881.4,422.7L903.0,409.5L924.1,395.6L944.8,381.0L964.9,365.9L984.6,350.1L1003.7,333.8L1022.3,316.9L1040.3,299.4L1057.7,281.3L1074.5,262.7L1090.6,243.6L1106.1,223.9L1120.9,203.7L1135.0,183.0L1148.3,161.9L1161.0,140.3L1172.8,118.2L1183.9,95.8L1194.1,72.9L1203.5,49.6L1212.1,25.9L1219.7,1.9L1226.5,-22.4L1232.4,-47.0L1237.4,-71.9L1241.4,-97.1L1244.5,-122.5L1246.6,-148.1L1247.7,-173.9L1247.8,-199.8L1246.9,-225.8L1244.9,-251.9L1242.0,-278.1L1237.9,-304.3L1232.8,-330.5L1226.6,-356.6L1219.4,-382.6M-177.5,-394.8L-184.5,-375.5L-190.7,-356.1L-196.0,-336.5L-200.6,-316.9L-204.4,-297.2L-207.4,-277.5L-209.6,-257.8L-211.1,-238.1L-211.7,-218.4L-211.6,-198.8L-210.7,-179.3L-209.1,-159.9L-206.7,-140.6L-203.6,-121.4L-199.8,-102.5L-195.3,-83.7L-190.0,-65.1L-184.1,-46.8L-177.5,-28.7L-170.2,-10.9L-162.3,6.6L-153.8,23.8L-144.6,40.7L-134.8,57.3L-124.4,73.5L-113.5,89.4L-102.0,104.9L-90.0,120.0L-77.4,134.7L-64.3,149.0L-50.7,162.8L-36.7,176.2L-22.2,189.2L-7.2,201.7L8.1,213.8L23.9,225.4L40.1,236.5L56.6,247.1L73.5,257.2L90.8,266.8L108.3,275.9L126.1,284.5L144.3,292.5L162.7,300.0L181.3,307.0L200.1,313.4L219.2,319.3L238.4,324.7L257.9,329.5L277.4,333.7L297.1,337.4L316.9,340.5L336.8,343.0L356.8,345.0L376.8,346.4L396.9,347.3L417.0,347.6L437.1,347.3L457.2,346.4L477.2,345.0L497.2,343.0L517.1,340.5L536.9,337.4L556.6,333.7L576.1,329.5L595.6,324.7L614.8,319.3L633.9,313.4L652.7,307.0L671.3,300.0L689.7,292.5L707.9,284.5L725.7,275.9L743.2,266.8L760.5,257.2L777.4,247.1L793.9,236.5L810.1,225.4L825.9,213.8L841.2,201.7L856.2,189.2L870.7,176.2L884.7,162.8L898.3,149.0L911.4,134.7L924.0,120.0L936.0,104.9L947.5,89.4L958.4,73.5L968.8,57.3L978.6,40.7L987.8,23.8L996.3,6.6L1004.2,-10.9L1011.5,-28.7L1018.1,-46.8L1024.0,-65.1L1029.3,-83.7L1033.8,-102.5L1037.6,-121.4L1040.7,-140.6L1043.1,-159.9L1044.7,-179.3L1045.6,-198.8L1045.7,-218.4L1045.1,-238.1L1043.6,-257.8L1041.4,-277.5L1038.4,-297.2L1034.6,-316.9L1030.0,-336.5L1024.7,-356.1L1018.5,-375.5L1011.5,-394.8M40.8,-398.2L34.2,-386.0L28.1,-373.6L22.5,-361.1L17.4,-348.4L12.9,-335.6L8.8,-322.7L5.3,-309.7L2.3,-296.6L-0.2,-283.5L-2.1,-270.3L-3.5,-257.1L-4.4,-243.9L-4.8,-230.7L-4.7,-217.6L-4.1,-204.5L-2.9,-191.4L-1.3,-178.4L0.9,-165.5L3.5,-152.7L6.6,-140.1L10.2,-127.5L14.3,-115.1L18.8,-102.9L23.8,-90.8L29.3,-79.0L35.1,-67.3L41.5,-55.8L48.2,-44.5L55.3,-33.5L62.9,-22.7L70.8,-12.2L79.2,-2.0L87.8,8.0L96.9,17.7L106.3,27.2L116.0,36.3L126.1,45.1L136.4,53.6L147.1,61.7L158.1,69.6L169.3,77.1L180.8,84.2L192.5,91.0L204.5,97.5L216.7,103.5L229.1,109.3L241.7,114.6L254.5,119.6L267.4,124.1L280.5,128.3L293.8,132.1L307.1,135.6L320.6,138.6L334.2,141.2L347.9,143.4L361.6,145.2L375.4,146.6L389.3,147.7L403.1,148.3L417.0,148.5L430.9,148.3L444.7,147.7L458.6,146.6L472.4,145.2L486.1,143.4L499.8,141.2L513.4,138.6L526.9,135.6L540.2,132.1L553.5,128.3L566.6,124.1L579.5,119.6L592.3,114.6L604.9,109.3L617.3,103.5L629.5,97.5L641.5,91.0L653.2,84.2L664.7,77.1L675.9,69.6L686.9,61.7L697.6,53.6L707.9,45.1L718.0,36.3L727.7,27.2L737.1,17.7L746.2,8.0L754.8,-2.0L763.2,-12.2L771.1,-22.7L778.7,-33.5L785.8,-44.5L792.5,-55.8L798.9,-67.3L804.7,-79.0L810.2,-90.8L815.2,-102.9L819.7,-115.1L823.8,-127.5L827.4,-140.1L830.5,-152.7L833.1,-165.5L835.3,-178.4L836.9,-191.4L838.1,-204.5L838.7,-217.6L838.8,-230.7L838.4,-243.9L837.5,-257.1L836.1,-270.3L834.2,-283.5L831.7,-296.6L828.7,-309.7L825.2,-322.7L821.1,-335.6L816.6,-348.4L811.5,-361.1L805.9,-373.6L799.8,-386.0L793.2,-398.2M308.3,-399.5L301.9,-395.9L295.6,-392.1L289.5,-388.2L283.5,-384.0L277.7,-379.6L272.1,-375.1L266.7,-370.3L261.5,-365.4L256.5,-360.4L251.6,-355.2L247.0,-349.9L242.7,-344.4L238.5,-338.8L234.6,-333.0L230.9,-327.2L227.4,-321.2L224.2,-315.2L221.2,-309.0L218.5,-302.8L216.0,-296.5L213.8,-290.1L211.9,-283.7L210.1,-277.2L208.7,-270.7L207.5,-264.2L206.5,-257.6L205.9,-251.0L205.4,-244.4L205.3,-237.8L205.4,-231.1L205.7,-224.6L206.3,-218.0L207.2,-211.5L208.3,-205.0L209.7,-198.5L211.3,-192.1L213.1,-185.8L215.2,-179.5L217.6,-173.3L220.1,-167.2L222.9,-161.2L226.0,-155.2L229.2,-149.4L232.7,-143.7L236.4,-138.1L240.3,-132.6L244.4,-127.3L248.7,-122.1L253.2,-117.0L257.9,-112.1L262.8,-107.3L267.8,-102.7L273.1,-98.2L278.5,-93.9L284.0,-89.8L289.7,-85.8L295.5,-82.0L301.5,-78.4L307.6,-75.0L313.8,-71.8L320.2,-68.8L326.6,-65.9L333.2,-63.3L339.8,-60.9L346.6,-58.6L353.4,-56.6L360.3,-54.8L367.2,-53.2L374.2,-51.8L381.3,-50.6L388.4,-49.6L395.5,-48.9L402.7,-48.3L409.8,-48.0L417.0,-47.9L424.2,-48.0L431.3,-48.3L438.5,-48.9L445.6,-49.6L452.7,-50.6L459.8,-51.8L466.8,-53.2L473.7,-54.8L480.6,-56.6L487.4,-58.6L494.2,-60.9L500.8,-63.3L507.4,-65.9L513.8,-68.8L520.2,-71.8L526.4,-75.0L532.5,-78.4L538.5,-82.0L544.3,-85.8L550.0,-89.8L555.5,-93.9L560.9,-98.2L566.2,-102.7L571.2,-107.3L576.1,-112.1L580.8,-117.0L585.3,-122.1L589.6,-127.3L593.7,-132.6L597.6,-138.1L601.3,-143.7L604.8,-149.4L608.0,-155.2L611.1,-161.2L613.9,-167.2L616.4,-173.3L618.8,-179.5L620.9,-185.8L622.7,-192.1L624.3,-198.5L625.7,-205.0L626.8,-211.5L627.7,-218.0L628.3,-224.6L628.6,-231.1L628.7,-237.8L628.6,-244.4L628.1,-251.0L627.5,-257.6L626.5,-264.2L625.3,-270.7L623.9,-277.2L622.1,-283.7L620.2,-290.1L618.0,-296.5L615.5,-302.8L612.8,-309.0L609.8,-315.2L606.6,-321.2L603.1,-327.2L599.4,-333.0L595.5,-338.8L591.3,-344.4L587.0,-349.9L582.4,-355.2L577.5,-360.4L572.5,-365.4L567.3,-370.3L561.9,-375.1L556.3,-379.6L550.5,-384.0L544.5,-388.2L538.4,-392.1L532.1,-395.9L525.7,-399.5" fill="none" stroke="#777" stroke-opacity="0.4" stroke-width="0.6"/>
</g>
<defs><clipPath id="gc"><rect x="19" y="162" width="1084" height="650"/></clipPath></defs>
<g fill="#32a032" fill-opacity="0.5" stroke="#fff" stroke-opacity="0.35" stroke-width="0.6">
<circle cx="425.5" cy="348.7" r="10.6"/>
<circle cx="446.3" cy="433.3" r="17.4"/>
<circle cx="259.3" cy="504" r="23.9"/>
<circle cx="354.3" cy="497.7" r="24.6"/>
<circle cx="345.8" cy="527.8" r="16.5"/>
<circle cx="385.7" cy="517" r="16"/>
<circle cx="458.4" cy="496.5" r="15.3"/>
<circle cx="315.5" cy="563.7" r="20.6"/>
<circle cx="397" cy="600.5" r="22.8"/>
<circle cx="384.1" cy="610.6" r="18.9"/>
<circle cx="406" cy="639.6" r="16"/>
<circle cx="438.3" cy="585.3" r="10.5"/>
<circle cx="436.2" cy="602.1" r="14.8"/>
<circle cx="435.8" cy="618.2" r="16"/>
<circle cx="479.3" cy="625.2" r="13.8"/>
<circle cx="500.6" cy="629.4" r="12.6"/>
<circle cx="501.1" cy="577" r="9.3"/>
<circle cx="512.3" cy="580.3" r="7.7"/>
<circle cx="266.6" cy="641.1" r="10.1"/>
<circle cx="146.4" cy="657.1" r="13.8"/>
<circle cx="137.4" cy="690.3" r="12.1"/>
<circle cx="118.2" cy="736.3" r="17.4"/>
<circle cx="207.6" cy="721.1" r="14.5"/>
<circle cx="261.6" cy="733.6" r="16.5"/>
<circle cx="256.9" cy="748.3" r="18.2"/>
<circle cx="296" cy="713.7" r="21.9"/>
</g>
<g fill="#50be50" fill-opacity="0.22" stroke="#4fa34c" stroke-width="1.9">
<circle cx="547.0" cy="231.9" r="4.8"/>
<circle cx="522.3" cy="276.5" r="4.8"/>
<circle cx="593.6" cy="286.1" r="4.8"/>
<circle cx="548.2" cy="304.7" r="4.8"/>
<circle cx="537.8" cy="328.1" r="4.8"/>
<circle cx="565.4" cy="327.1" r="4.8"/>
<circle cx="592.6" cy="435.1" r="4.8"/>
<circle cx="464.2" cy="525.7" r="4.8"/>
<circle cx="475.8" cy="567" r="4.8"/>
<circle cx="503.6" cy="560.2" r="4.8"/>
<circle cx="520.4" cy="570.7" r="4.8"/>
</g>
<circle cx="148.2" cy="202" r="17.6" fill="#32a032" fill-opacity="0.5" stroke="#111" stroke-width="1.3"/>
<rect x="818.5" y="186.5" width="267" height="337" fill="#fff" fill-opacity="0.27" stroke="#f0f0ee" stroke-width="2"/>
<g font-family="Liberation Sans, Arial, sans-serif" fill="#000">
<text x="832" y="215" font-size="12.6" font-weight="bold">Legend</text>
<g font-size="11.2">
<text x="918" y="269">2000 mg/1000p/day</text>
<text x="918" y="335">1000 mg/1000p/day</text>
<text x="918" y="389">500 mg/1000p/day</text>
<text x="918" y="430">50 mg/1000p/day and lower</text>
<text x="918" y="460">Below quantification level</text>
</g></g>
<g fill="#32a032" fill-opacity="0.5">
<circle cx="872" cy="263" r="39.5"/><circle cx="872" cy="335" r="28"/><circle cx="872" cy="388" r="19.8"/>
</g>
<circle cx="872" cy="426" r="4.8" fill="#50be50" fill-opacity="0.22" stroke="#4fa34c" stroke-width="1.9"/>
<circle cx="872" cy="456" r="5" fill="none" stroke="#666" stroke-width="0.7"/>
</g>
</svg>
</body>
</html>
